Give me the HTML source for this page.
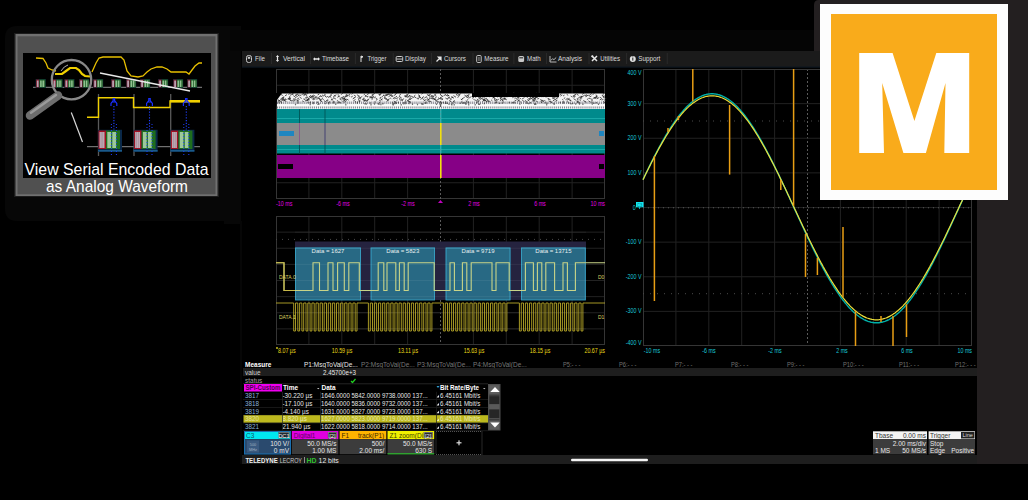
<!DOCTYPE html>
<html><head><meta charset="utf-8"><title>Scope</title>
<style>*{margin:0;padding:0}html,body{width:1028px;height:500px;overflow:hidden;background:#000}svg{display:block;font-family:"Liberation Sans",sans-serif}</style>
</head><body><svg width="1028" height="500" viewBox="0 0 1028 500" font-family="Liberation Sans, sans-serif"><path d="M17 26 H241 V224 H224 V221 H17 Q5 221 5 209 V38 Q5 26 17 26 Z" fill="#070707"/><rect x="240" y="221" width="2" height="243" fill="#060606" /><rect x="230" y="30" width="585" height="21" fill="#050505" /><rect x="14" y="33" width="205" height="164" fill="#1c1c1c" /><rect x="15.5" y="34" width="202" height="162" fill="#707070" /><rect x="17.5" y="36.3" width="198" height="158" fill="#505050" /><rect x="23" y="53" width="188" height="125" fill="#000" /><polyline points="36,58 43,58.5 46,63 48,68 52,70 56,71" stroke="#e8c000" stroke-width="1.3" fill="none" /><polyline points="55,74 62,74 66,71 70,68 76,68 79,70 82,74 85,76 90,76.5" stroke="#f0d000" stroke-width="2.2" fill="none" /><polyline points="92,72 96,63 99,58 103,57 108,57 114,57 121,57 124,60 127,71 131,76 138,77 143,76 147,72 151,69 157,67 162,67 167,69 171,72 178,72 186,72 189,74 192,70 195,66 199,63 202,63" stroke="#e8c000" stroke-width="1.3" fill="none" /><line x1="33" y1="87.3" x2="202" y2="87.3" stroke="#8a8a8a" stroke-width="1" /><rect x="35.6" y="79" width="10.2" height="9" fill="#0a2838" /><rect x="36.1" y="79.5" width="3.2" height="8" fill="#7a1020" /><rect x="36.800000000000004" y="80.5" width="1.8" height="6.5" fill="#b8a0b0" /><rect x="39.4" y="79.5" width="6" height="8" fill="#1a5a22" /><rect x="40.1" y="80.5" width="1.6" height="6.5" fill="#90c090" /><rect x="42.4" y="80.5" width="1.6" height="6.5" fill="#90c090" /><rect x="44.400000000000006" y="80.5" width="0.6" height="6.5" fill="#5a8a5a" /><rect x="52.4" y="79" width="10.2" height="9" fill="#0a2838" /><rect x="52.9" y="79.5" width="3.2" height="8" fill="#7a1020" /><rect x="53.6" y="80.5" width="1.8" height="6.5" fill="#b8a0b0" /><rect x="56.199999999999996" y="79.5" width="6" height="8" fill="#1a5a22" /><rect x="56.9" y="80.5" width="1.6" height="6.5" fill="#90c090" /><rect x="59.199999999999996" y="80.5" width="1.6" height="6.5" fill="#90c090" /><rect x="61.2" y="80.5" width="0.6" height="6.5" fill="#5a8a5a" /><rect x="64.3" y="79" width="10.2" height="9" fill="#0a2838" /><rect x="64.8" y="79.5" width="3.2" height="8" fill="#7a1020" /><rect x="65.5" y="80.5" width="1.8" height="6.5" fill="#b8a0b0" /><rect x="68.1" y="79.5" width="6" height="8" fill="#1a5a22" /><rect x="68.8" y="80.5" width="1.6" height="6.5" fill="#90c090" /><rect x="71.1" y="80.5" width="1.6" height="6.5" fill="#90c090" /><rect x="73.1" y="80.5" width="0.6" height="6.5" fill="#5a8a5a" /><rect x="79" y="79" width="10.2" height="9" fill="#0a2838" /><rect x="79.5" y="79.5" width="3.2" height="8" fill="#7a1020" /><rect x="80.2" y="80.5" width="1.8" height="6.5" fill="#b8a0b0" /><rect x="82.8" y="79.5" width="6" height="8" fill="#1a5a22" /><rect x="83.5" y="80.5" width="1.6" height="6.5" fill="#90c090" /><rect x="85.8" y="80.5" width="1.6" height="6.5" fill="#90c090" /><rect x="87.8" y="80.5" width="0.6" height="6.5" fill="#5a8a5a" /><rect x="93" y="79" width="10.2" height="9" fill="#0a2838" /><rect x="93.5" y="79.5" width="3.2" height="8" fill="#7a1020" /><rect x="94.2" y="80.5" width="1.8" height="6.5" fill="#b8a0b0" /><rect x="96.8" y="79.5" width="6" height="8" fill="#1a5a22" /><rect x="97.5" y="80.5" width="1.6" height="6.5" fill="#90c090" /><rect x="99.8" y="80.5" width="1.6" height="6.5" fill="#90c090" /><rect x="101.8" y="80.5" width="0.6" height="6.5" fill="#5a8a5a" /><rect x="111" y="79" width="10.2" height="9" fill="#0a2838" /><rect x="111.5" y="79.5" width="3.2" height="8" fill="#7a1020" /><rect x="112.2" y="80.5" width="1.8" height="6.5" fill="#b8a0b0" /><rect x="114.8" y="79.5" width="6" height="8" fill="#1a5a22" /><rect x="115.5" y="80.5" width="1.6" height="6.5" fill="#90c090" /><rect x="117.8" y="80.5" width="1.6" height="6.5" fill="#90c090" /><rect x="119.8" y="80.5" width="0.6" height="6.5" fill="#5a8a5a" /><rect x="126" y="79" width="10.2" height="9" fill="#0a2838" /><rect x="126.5" y="79.5" width="3.2" height="8" fill="#7a1020" /><rect x="127.2" y="80.5" width="1.8" height="6.5" fill="#b8a0b0" /><rect x="129.8" y="79.5" width="6" height="8" fill="#1a5a22" /><rect x="130.5" y="80.5" width="1.6" height="6.5" fill="#90c090" /><rect x="132.8" y="80.5" width="1.6" height="6.5" fill="#90c090" /><rect x="134.8" y="80.5" width="0.6" height="6.5" fill="#5a8a5a" /><rect x="140" y="79" width="10.2" height="9" fill="#0a2838" /><rect x="140.5" y="79.5" width="3.2" height="8" fill="#7a1020" /><rect x="141.2" y="80.5" width="1.8" height="6.5" fill="#b8a0b0" /><rect x="143.8" y="79.5" width="6" height="8" fill="#1a5a22" /><rect x="144.5" y="80.5" width="1.6" height="6.5" fill="#90c090" /><rect x="146.8" y="80.5" width="1.6" height="6.5" fill="#90c090" /><rect x="148.8" y="80.5" width="0.6" height="6.5" fill="#5a8a5a" /><rect x="158" y="79" width="10.2" height="9" fill="#0a2838" /><rect x="158.5" y="79.5" width="3.2" height="8" fill="#7a1020" /><rect x="159.2" y="80.5" width="1.8" height="6.5" fill="#b8a0b0" /><rect x="161.8" y="79.5" width="6" height="8" fill="#1a5a22" /><rect x="162.5" y="80.5" width="1.6" height="6.5" fill="#90c090" /><rect x="164.8" y="80.5" width="1.6" height="6.5" fill="#90c090" /><rect x="166.8" y="80.5" width="0.6" height="6.5" fill="#5a8a5a" /><rect x="173" y="79" width="10.2" height="9" fill="#0a2838" /><rect x="173.5" y="79.5" width="3.2" height="8" fill="#7a1020" /><rect x="174.2" y="80.5" width="1.8" height="6.5" fill="#b8a0b0" /><rect x="176.8" y="79.5" width="6" height="8" fill="#1a5a22" /><rect x="177.5" y="80.5" width="1.6" height="6.5" fill="#90c090" /><rect x="179.8" y="80.5" width="1.6" height="6.5" fill="#90c090" /><rect x="181.8" y="80.5" width="0.6" height="6.5" fill="#5a8a5a" /><rect x="187" y="79" width="10.2" height="9" fill="#0a2838" /><rect x="187.5" y="79.5" width="3.2" height="8" fill="#7a1020" /><rect x="188.2" y="80.5" width="1.8" height="6.5" fill="#b8a0b0" /><rect x="190.8" y="79.5" width="6" height="8" fill="#1a5a22" /><rect x="191.5" y="80.5" width="1.6" height="6.5" fill="#90c090" /><rect x="193.8" y="80.5" width="1.6" height="6.5" fill="#90c090" /><rect x="195.8" y="80.5" width="0.6" height="6.5" fill="#5a8a5a" /><line x1="100" y1="73" x2="190" y2="91" stroke="#e8e8e8" stroke-width="1.5" /><line x1="71.3" y1="112.5" x2="82.5" y2="142" stroke="#d8d8d8" stroke-width="1.2" /><circle cx="71.5" cy="79.7" r="19.7" fill="none" stroke="#888" stroke-width="2.3"/><line x1="58" y1="95.5" x2="30" y2="115.5" stroke="#6e6e6e" stroke-width="8.5" stroke-linecap="round"/><line x1="56" y1="95" x2="31" y2="112.8" stroke="#9a9a9a" stroke-width="2.5" stroke-linecap="round"/><path d="M61 71 Q64 66 68 65" stroke="#c0c0c0" stroke-width="0.9" fill="none"/><line x1="98.5" y1="94" x2="98.5" y2="156" stroke="#5a5a5a" stroke-width="1.3" /><line x1="134" y1="94" x2="134" y2="156" stroke="#5a5a5a" stroke-width="1.3" /><line x1="170.7" y1="94" x2="170.7" y2="156" stroke="#5a5a5a" stroke-width="1.3" /><polyline points="87,117.3 98.5,117.3 98.5,97.7 133.5,97.7 133.5,107.5 170,107.5 170,101 200,101" stroke="#f0d000" stroke-width="1.4" fill="none" /><rect x="170" y="100" width="30" height="2.6" fill="#f0d000" /><line x1="87" y1="146.7" x2="200" y2="146.7" stroke="#8a8a8a" stroke-width="1" /><rect x="98" y="129.8" width="24" height="22" fill="#0a2848" /><rect x="98.5" y="130.5" width="7.5" height="18.5" fill="#a01020" /><rect x="99.5" y="132" width="5" height="16" fill="#c0a8b4" /><rect x="100.8" y="132" width="0.6" height="16" fill="#9a8a94" /><rect x="102.5" y="132" width="0.6" height="16" fill="#9a8a94" /><rect x="106" y="130.5" width="14" height="18.5" fill="#1e6e1e" /><rect x="107.3" y="132" width="3.8" height="16" fill="#9cc89c" /><rect x="112.3" y="132" width="3.8" height="16" fill="#9cc89c" /><rect x="98" y="150" width="24" height="1.6" fill="#1a5a8a" /><path d="M111.0 106 v-2.5 l2.2 -3 v-2 h1.4 v2 l2.2 3 v2.5 M112.7 102 h2.4" stroke="#1a30ff" stroke-width="1.2" fill="none"/><line x1="113.9" y1="106" x2="113.9" y2="130" stroke="#2040ff" stroke-width="1.1" stroke-dasharray="1.2 1.6"/><line x1="111.4" y1="124" x2="111.4" y2="155" stroke="#2040ff" stroke-width="1" stroke-dasharray="1 2"/><line x1="116.4" y1="124" x2="116.4" y2="155" stroke="#2040ff" stroke-width="1" stroke-dasharray="1 2"/><rect x="133.6" y="129.8" width="24" height="22" fill="#0a2848" /><rect x="134.1" y="130.5" width="7.5" height="18.5" fill="#a01020" /><rect x="135.1" y="132" width="5" height="16" fill="#c0a8b4" /><rect x="136.4" y="132" width="0.6" height="16" fill="#9a8a94" /><rect x="138.1" y="132" width="0.6" height="16" fill="#9a8a94" /><rect x="141.6" y="130.5" width="14" height="18.5" fill="#1e6e1e" /><rect x="142.9" y="132" width="3.8" height="16" fill="#9cc89c" /><rect x="147.9" y="132" width="3.8" height="16" fill="#9cc89c" /><rect x="133.6" y="150" width="24" height="1.6" fill="#1a5a8a" /><path d="M146.6 106 v-2.5 l2.2 -3 v-2 h1.4 v2 l2.2 3 v2.5 M148.3 102 h2.4" stroke="#1a30ff" stroke-width="1.2" fill="none"/><line x1="149.5" y1="106" x2="149.5" y2="130" stroke="#2040ff" stroke-width="1.1" stroke-dasharray="1.2 1.6"/><line x1="147.0" y1="124" x2="147.0" y2="155" stroke="#2040ff" stroke-width="1" stroke-dasharray="1 2"/><line x1="152.0" y1="124" x2="152.0" y2="155" stroke="#2040ff" stroke-width="1" stroke-dasharray="1 2"/><rect x="170.4" y="129.8" width="24" height="22" fill="#0a2848" /><rect x="170.9" y="130.5" width="7.5" height="18.5" fill="#a01020" /><rect x="171.9" y="132" width="5" height="16" fill="#c0a8b4" /><rect x="173.20000000000002" y="132" width="0.6" height="16" fill="#9a8a94" /><rect x="174.9" y="132" width="0.6" height="16" fill="#9a8a94" /><rect x="178.4" y="130.5" width="14" height="18.5" fill="#1e6e1e" /><rect x="179.70000000000002" y="132" width="3.8" height="16" fill="#9cc89c" /><rect x="184.70000000000002" y="132" width="3.8" height="16" fill="#9cc89c" /><rect x="170.4" y="150" width="24" height="1.6" fill="#1a5a8a" /><path d="M183.4 106 v-2.5 l2.2 -3 v-2 h1.4 v2 l2.2 3 v2.5 M185.10000000000002 102 h2.4" stroke="#1a30ff" stroke-width="1.2" fill="none"/><line x1="186.3" y1="106" x2="186.3" y2="130" stroke="#2040ff" stroke-width="1.1" stroke-dasharray="1.2 1.6"/><line x1="183.8" y1="124" x2="183.8" y2="155" stroke="#2040ff" stroke-width="1" stroke-dasharray="1 2"/><line x1="188.8" y1="124" x2="188.8" y2="155" stroke="#2040ff" stroke-width="1" stroke-dasharray="1 2"/><text x="24.5" y="174.8" fill="#fff" font-size="16.2" textLength="184" lengthAdjust="spacingAndGlyphs">View Serial Encoded Data</text><text x="46" y="192.4" fill="#fff" font-size="16.2" textLength="142" lengthAdjust="spacingAndGlyphs">as Analog Waveform</text><path d="M814 51 V5 Q814 0 819 0 H1028 V464 H977 V51 Z" fill="#231f20"/><rect x="242" y="51" width="735" height="413" fill="#000" /><rect x="242" y="51" width="735" height="16" fill="#1b1b1b" /><rect x="242" y="66.5" width="735" height="1.2" fill="#0c1620" /><text x="255" y="61" fill="#dcdcdc" font-size="7.5" text-anchor="start" font-weight="400" textLength="10" lengthAdjust="spacingAndGlyphs" >File</text><rect x="246.5" y="55.5" width="5" height="7" rx="2" fill="none" stroke="#c8c8c8" stroke-width="1"/><rect x="247.8" y="56.8" width="2.4" height="2" fill="#c8c8c8"/><rect x="271" y="53" width="0.8" height="11" fill="#2e2e2e" /><text x="283" y="61" fill="#dcdcdc" font-size="7.5" text-anchor="start" font-weight="400" textLength="22" lengthAdjust="spacingAndGlyphs" >Vertical</text><path d="M277.5 55 l1.6 2 h-1 v3 h1 l-1.6 2 l-1.6 -2 h1 v-3 h-1z" fill="#e8e8e8"/><rect x="310" y="53" width="0.8" height="11" fill="#2e2e2e" /><text x="322" y="61" fill="#dcdcdc" font-size="7.5" text-anchor="start" font-weight="400" textLength="27" lengthAdjust="spacingAndGlyphs" >Timebase</text><path d="M313 59 l2 -1.8 v1.1 h3 v-1.1 l2 1.8 l-2 1.8 v-1.1 h-3 v1.1z" fill="#e8e8e8"/><rect x="354.9" y="53" width="0.8" height="11" fill="#2e2e2e" /><text x="367.5" y="61" fill="#dcdcdc" font-size="7.5" text-anchor="start" font-weight="400" textLength="19.0" lengthAdjust="spacingAndGlyphs" >Trigger</text><path d="M361 62 V56 M361 56 l2 0.8 l-2 0.9" stroke="#e0e0e0" stroke-width="1" fill="#e0e0e0"/><rect x="392.8" y="53" width="0.8" height="11" fill="#2e2e2e" /><text x="405" y="61" fill="#dcdcdc" font-size="7.5" text-anchor="start" font-weight="400" textLength="20.899999999999977" lengthAdjust="spacingAndGlyphs" >Display</text><rect x="396.2" y="56.5" width="6.5" height="5" rx="1" fill="none" stroke="#d0d0d0" stroke-width="1"/><rect x="397" y="58.6" width="5" height="0.9" fill="#d0d0d0"/><rect x="431.2" y="53" width="0.8" height="11" fill="#2e2e2e" /><text x="444" y="61" fill="#dcdcdc" font-size="7.5" text-anchor="start" font-weight="400" textLength="22" lengthAdjust="spacingAndGlyphs" >Cursors</text><path d="M436.5 61.5 l3.5 -3.5 M438.3 57 h2.7 v2.7z" stroke="#e8e8e8" stroke-width="1.2" fill="#e8e8e8"/><rect x="472.6" y="53" width="0.8" height="11" fill="#2e2e2e" /><text x="484.3" y="61" fill="#dcdcdc" font-size="7.5" text-anchor="start" font-weight="400" textLength="24.30000000000001" lengthAdjust="spacingAndGlyphs" >Measure</text><rect x="476.7" y="55.5" width="4.5" height="7" rx="1" fill="none" stroke="#c0c0c0" stroke-width="1"/><rect x="478.2" y="57.5" width="1.5" height="1" fill="#c0c0c0"/><rect x="478.2" y="59.5" width="1.5" height="1" fill="#c0c0c0"/><rect x="513.5" y="53" width="0.8" height="11" fill="#2e2e2e" /><text x="527" y="61" fill="#dcdcdc" font-size="7.5" text-anchor="start" font-weight="400" textLength="13.700000000000045" lengthAdjust="spacingAndGlyphs" >Math</text><rect x="518.3" y="56" width="5.8" height="6" rx="1.5" fill="#c8c8c8"/><rect x="519.3" y="57.2" width="3.8" height="1.2" fill="#333"/><rect x="546" y="53" width="0.8" height="11" fill="#2e2e2e" /><text x="558" y="61" fill="#dcdcdc" font-size="7.5" text-anchor="start" font-weight="400" textLength="24" lengthAdjust="spacingAndGlyphs" >Analysis</text><path d="M550 56 V62 H556.5 M550.8 60.5 l1.8 -1.8 l1.3 1 l2.3 -2.2" stroke="#c8c8c8" stroke-width="0.9" fill="none"/><rect x="588.6" y="53" width="0.8" height="11" fill="#2e2e2e" /><text x="600.3" y="61" fill="#dcdcdc" font-size="7.5" text-anchor="start" font-weight="400" textLength="19.700000000000045" lengthAdjust="spacingAndGlyphs" >Utilities</text><path d="M592 56 l5 5 M597 56 l-5 5" stroke="#e8e8e8" stroke-width="1.5"/><circle cx="592.3" cy="56.3" r="1.1" fill="#e8e8e8"/><rect x="626.3" y="53" width="0.8" height="11" fill="#2e2e2e" /><text x="638.2" y="61" fill="#dcdcdc" font-size="7.5" text-anchor="start" font-weight="400" textLength="22.09999999999991" lengthAdjust="spacingAndGlyphs" >Support</text><circle cx="632.8" cy="59" r="3" fill="#e0e0e0"/><rect x="632.3" y="57.8" width="1" height="2.8" fill="#222"/><rect x="632.3" y="56.5" width="1" height="0.8" fill="#222"/><rect x="666.8" y="53" width="0.8" height="11" fill="#2e2e2e" /><line x1="308.9" y1="69" x2="308.9" y2="199" stroke="#222222" stroke-width="1" /><line x1="341.8" y1="69" x2="341.8" y2="199" stroke="#222222" stroke-width="1" /><line x1="374.7" y1="69" x2="374.7" y2="199" stroke="#222222" stroke-width="1" /><line x1="407.6" y1="69" x2="407.6" y2="199" stroke="#222222" stroke-width="1" /><line x1="440.5" y1="69" x2="440.5" y2="199" stroke="#5a5a5a" stroke-width="1" stroke-dasharray="2 2"/><line x1="473.4" y1="69" x2="473.4" y2="199" stroke="#222222" stroke-width="1" /><line x1="506.3" y1="69" x2="506.3" y2="199" stroke="#222222" stroke-width="1" /><line x1="539.2" y1="69" x2="539.2" y2="199" stroke="#222222" stroke-width="1" /><line x1="572.1" y1="69" x2="572.1" y2="199" stroke="#222222" stroke-width="1" /><line x1="276" y1="85.25" x2="605" y2="85.25" stroke="#222222" stroke-width="1" /><line x1="276" y1="101.5" x2="605" y2="101.5" stroke="#222222" stroke-width="1" /><line x1="276" y1="117.75" x2="605" y2="117.75" stroke="#222222" stroke-width="1" /><line x1="276" y1="134.0" x2="605" y2="134.0" stroke="#222222" stroke-width="1" /><line x1="276" y1="150.25" x2="605" y2="150.25" stroke="#222222" stroke-width="1" /><line x1="276" y1="166.5" x2="605" y2="166.5" stroke="#222222" stroke-width="1" /><line x1="276" y1="182.75" x2="605" y2="182.75" stroke="#222222" stroke-width="1" /><rect x="276.5" y="69.5" width="328" height="129" fill="none" stroke="#353535"/><rect x="277" y="93.5" width="328" height="15.5" fill="#f4f4f4" /><path d="M383.2 95.1l2.2 1.4M546.4 94.7l2.1 1.3M289.3 97.3l1.3 0.8M457.7 94.4l2.1 1.3M483.8 98.4l1.3 -0.8M293.3 95.7l2.1 1.3M372.0 95.1l1.4 -0.9M460.8 99.1l1.4 0.9M399.1 98.1l1.3 0.8M480.0 97.7l2.1 -1.3M429.7 100.9l1.8 1.1M537.6 99.2l1.6 -1.0M449.3 100.6l2.4 -1.5M476.7 94.5l2.0 1.3M525.3 95.1l2.0 1.2M592.5 94.6l2.1 -1.3M388.6 96.6l2.0 -1.2M299.6 94.7l1.6 1.0M296.9 99.3l2.2 -1.4M370.3 96.9l2.3 1.4M585.5 96.7l2.2 -1.4M296.3 99.8l1.4 0.9M407.5 100.9l2.0 1.2M424.3 98.1l2.6 -1.6M560.4 96.1l1.9 -1.2M500.9 96.9l1.6 1.0M334.8 95.7l1.6 -1.0M549.6 95.4l1.7 1.0M414.4 96.8l2.1 1.3M503.5 97.9l2.2 1.4M426.8 100.5l2.7 -1.7M407.6 97.0l2.0 -1.2M297.4 94.5l1.5 1.0M313.1 98.5l1.4 0.9M453.0 101.1l2.2 1.4M563.8 98.6l1.4 -0.9M590.4 98.5l2.0 1.2M555.5 101.4l1.9 -1.2M379.3 95.1l2.4 -1.5M434.0 99.2l2.0 1.3M588.9 98.0l1.4 0.9M525.7 96.2l2.2 1.4M505.4 96.0l1.8 1.1M393.7 95.7l2.1 -1.3M485.8 98.6l2.5 1.5M541.4 100.1l2.4 1.5M342.6 97.7l2.4 1.5M536.2 97.5l1.5 -0.9M423.7 101.0l2.8 -1.7M303.4 94.8l2.0 -1.2M344.0 98.7l2.6 1.7M434.3 98.9l2.5 1.5M550.8 94.9l1.8 1.1M433.8 95.3l2.5 -1.5M305.5 101.1l2.4 -1.5M408.7 101.1l2.4 1.5M602.7 94.2l2.1 -1.3M541.5 95.1l2.5 -1.6M492.6 96.6l2.1 1.3M284.0 100.0l2.4 1.5M449.7 101.0l1.9 1.2M548.0 95.6l1.6 -1.0M441.4 99.7l1.7 -1.1M550.6 94.5l2.4 -1.5M494.3 100.1l2.0 1.3M451.4 97.9l1.2 -0.8M531.7 98.6l2.4 1.5M333.5 97.6l2.4 1.5M383.9 97.9l2.1 1.3M566.7 94.4l1.5 0.9M530.3 97.8l2.1 1.3M422.4 98.6l2.0 1.3M504.2 97.4l2.1 -1.3M443.5 95.9l2.0 -1.3M579.7 100.7l1.5 -1.0M322.0 94.9l1.9 1.2M497.1 97.2l1.5 -1.0M534.1 100.7l1.4 -0.9M323.9 100.6l2.7 1.7M521.9 94.7l2.6 1.6M601.7 100.2l1.5 -0.9M603.1 97.0l1.9 -1.2M381.5 99.4l1.2 -0.8M421.5 94.1l1.7 -1.1M445.0 94.5l2.8 1.7M595.7 94.8l1.6 1.0M574.1 95.4l2.4 -1.5M555.7 99.1l2.7 -1.7M326.0 100.9l2.1 -1.3M306.3 94.4l2.3 -1.4M570.7 96.0l1.2 0.8M539.9 94.6l2.6 1.6M363.7 94.9l1.2 -0.8M580.9 96.0l1.4 0.9M584.7 101.3l1.6 1.0M343.2 96.3l1.7 1.1M372.1 97.8l1.5 -0.9M540.6 101.5l1.3 0.8M517.5 98.1l1.5 -0.9M357.6 97.4l2.3 -1.4M492.3 98.1l2.6 -1.6M502.6 101.4l1.7 1.1M409.7 96.6l1.3 0.8M281.7 98.7l2.6 -1.6M330.5 94.6l2.5 -1.6M473.4 99.2l1.3 0.8M328.7 97.3l1.6 -1.0M596.0 98.1l1.6 -1.0M348.5 95.4l1.7 1.1M432.7 97.8l1.5 1.0M306.8 100.1l1.4 0.9M406.2 96.2l2.2 1.4M469.1 98.0l2.4 -1.5M527.7 99.4l2.0 -1.2M514.5 98.8l1.3 -0.8M517.7 100.1l1.4 0.9M548.1 98.4l2.6 1.6M304.9 94.3l2.2 1.4M400.5 97.4l1.3 0.8M482.4 99.1l2.0 1.2M426.9 94.5l2.7 1.7M493.3 94.5l2.4 -1.5M542.4 100.3l1.6 1.0M352.7 98.9l1.9 -1.2M302.2 100.8l1.7 1.0M479.4 98.8l1.3 0.8M385.8 98.9l2.3 1.4M281.1 94.5l1.6 1.0M504.0 99.1l1.7 -1.0M429.4 97.5l1.4 0.9M379.2 94.6l2.0 -1.2M427.5 100.1l2.7 -1.7M603.0 96.9l2.7 1.7M301.5 94.7l2.4 -1.5M589.5 95.0l2.5 -1.6M567.9 99.3l1.6 -1.0M406.3 95.2l2.7 -1.7M410.0 99.5l1.9 -1.2M380.7 100.3l1.2 -0.8M552.2 94.9l2.7 1.7M572.7 96.2l1.8 -1.1M405.0 100.5l1.3 -0.8M524.9 100.4l1.6 1.0M550.8 96.1l2.7 1.7M595.5 97.3l1.7 -1.1M534.5 97.2l1.2 -0.8M576.6 101.1l2.1 1.3M293.2 99.5l1.9 1.2M488.4 96.1l1.3 0.8M333.0 97.1l1.7 -1.0M519.4 101.3l1.6 1.0M375.7 98.2l1.8 1.1M488.0 94.6l2.0 -1.3M457.5 97.4l1.7 -1.1M417.2 98.1l1.6 1.0M389.2 94.7l1.6 -1.0M542.5 95.5l1.2 -0.8M402.6 99.6l1.5 -1.0M387.9 94.5l1.6 -1.0M318.3 97.8l2.2 1.4M307.4 100.7l1.8 -1.1M418.6 96.3l2.5 1.6M318.7 97.2l2.4 -1.5M594.6 97.7l1.3 -0.8M595.9 95.9l1.4 0.9M326.9 101.3l1.4 -0.9M304.9 99.8l1.2 0.8M353.3 100.9l2.2 -1.4M592.7 98.7l2.0 -1.3M506.1 94.8l1.3 0.8M404.3 95.7l2.2 1.4M453.3 101.5l1.6 -1.0M488.4 100.6l2.0 1.2M456.4 94.2l1.9 -1.2M295.1 95.5l2.6 -1.6M303.6 95.7l1.9 -1.2M351.4 94.3l1.7 -1.1M395.8 97.0l1.2 -0.8M519.4 97.8l1.5 1.0M379.2 100.2l1.6 1.0M363.9 100.7l1.4 -0.9M477.1 100.7l2.0 1.2M588.2 95.1l1.8 1.1M284.8 98.5l1.9 1.2M337.4 97.4l2.3 -1.5M517.3 101.5l2.7 -1.7M339.5 98.9l2.0 -1.3M287.5 99.0l1.8 -1.1M600.1 97.3l1.4 0.9M368.8 96.6l2.7 1.7M461.1 99.7l1.8 -1.1M546.6 97.2l1.3 -0.8M341.2 98.1l1.9 -1.2M396.5 100.7l1.2 -0.8M358.3 98.7l1.8 -1.2M288.4 94.5l2.7 -1.7M340.9 94.5l2.2 -1.4M366.3 101.2l2.2 -1.4M521.8 99.2l2.7 -1.7M278.2 99.7l2.7 1.7M285.0 95.8l2.0 -1.2M589.9 96.9l1.6 -1.0M544.3 95.0l2.0 1.2M540.2 99.5l2.5 1.6M476.2 96.5l1.7 -1.1M534.1 98.5l2.0 -1.3M523.9 95.9l1.3 0.8M435.0 98.1l1.5 -0.9M566.8 101.4l1.6 1.0M345.3 97.2l2.8 -1.7M333.8 95.0l1.9 1.2M522.3 100.4l2.3 1.4M532.8 96.2l1.6 -1.0M399.3 99.5l1.5 0.9M337.9 95.8l1.7 1.0M384.0 97.0l2.8 1.7M490.1 94.8l1.9 1.2M310.6 97.6l2.5 -1.6M576.9 94.3l1.7 1.0M293.5 98.5l2.5 1.6M582.1 96.8l2.6 -1.6M474.8 99.8l2.3 1.4M311.7 98.5l2.2 1.4M289.3 96.6l1.3 -0.8M289.5 99.5l2.7 1.7M545.6 97.1l1.8 -1.1M302.6 94.2l2.0 -1.2M297.8 94.8l1.8 1.1M486.7 94.7l1.5 -0.9M411.4 96.1l1.7 1.1M379.5 98.2l1.8 -1.1M283.0 99.7l2.5 1.6M405.2 97.0l2.7 -1.7M572.7 97.2l2.5 -1.6M466.5 96.7l2.4 1.5M281.9 98.1l2.2 -1.4M306.2 98.7l1.8 1.1M324.9 96.1l2.0 1.3M312.7 97.7l2.5 1.6M375.9 100.3l1.3 -0.8M380.2 98.6l2.2 1.4M573.6 98.7l2.5 1.6M487.0 100.4l2.2 1.4M549.0 95.4l1.5 -1.0M584.8 95.2l1.8 1.1M358.0 99.4l2.6 1.6M566.9 100.3l2.3 -1.4M315.6 98.5l2.1 -1.3M489.9 96.3l1.6 -1.0M493.1 97.4l1.9 1.2M278.2 101.4l1.9 -1.2M527.4 99.8l1.9 1.2M542.9 97.0l1.3 -0.8M418.2 94.7l1.9 1.2M290.3 95.0l2.7 -1.7M532.1 97.8l1.3 -0.8M491.1 99.9l1.2 0.8M603.7 99.5l2.5 1.6M320.2 100.6l1.7 1.0M502.1 99.4l1.6 -1.0M477.2 95.9l1.7 -1.1M573.9 97.4l1.6 -1.0M345.3 96.0l2.0 -1.3M399.1 95.5l1.8 -1.2M499.9 100.7l1.5 -0.9M314.7 98.0l2.2 -1.4M593.9 97.4l2.0 1.3M359.7 98.0l2.6 -1.6M363.8 101.4l2.1 -1.3M385.5 94.6l1.6 1.0M374.2 97.9l1.7 -1.1M517.4 99.6l1.6 -1.0M479.1 97.2l2.0 1.3M320.3 95.7l2.2 1.4M294.8 98.3l1.7 -1.1M452.2 97.1l1.7 1.1M344.0 98.7l2.0 1.2M281.6 100.0l2.3 -1.5M308.4 98.8l2.6 -1.6M408.8 96.0l1.2 -0.8M472.1 98.3l2.2 -1.4M358.5 100.8l1.3 0.8M410.2 95.8l1.3 0.8M281.1 98.1l2.7 1.7M412.5 97.9l2.2 -1.4M543.8 95.3l1.7 -1.1M482.3 101.5l2.4 -1.5M511.7 94.0l2.6 -1.6M303.4 98.9l1.5 0.9M362.7 98.8l1.4 -0.9M510.4 96.0l2.1 -1.3M501.9 100.9l2.8 -1.7M487.6 101.2l1.5 1.0M332.7 100.8l2.5 1.6M586.9 99.6l1.7 -1.1M384.8 95.8l2.7 -1.7M431.9 98.0l1.2 0.8M420.4 99.4l2.1 -1.3M535.9 96.9l2.1 1.3M324.4 94.2l1.4 0.9M390.1 95.1l1.2 0.8M322.4 98.8l1.3 0.8M518.7 94.5l2.1 -1.3M342.4 101.2l2.1 1.3M565.5 99.7l2.3 -1.5M312.1 95.5l1.4 0.9M588.4 100.8l2.4 1.5M547.6 98.7l1.7 1.0M320.5 99.9l2.2 -1.4M381.7 97.2l1.2 -0.8M582.1 94.4l2.4 -1.5M529.3 98.5l2.0 -1.2M479.8 94.2l1.9 -1.2M447.1 94.7l2.0 1.2M453.4 95.6l2.6 1.6M465.4 96.2l1.9 1.2M371.6 99.6l1.3 -0.8M438.0 97.7l2.5 1.5M594.2 98.4l2.7 -1.7M466.6 95.2l2.5 1.6M440.4 94.8l2.2 1.4M437.8 101.4l2.1 1.3M483.0 96.7l1.8 -1.2M569.5 99.6l1.9 1.2M399.0 96.3l1.9 1.2M401.4 100.6l1.6 -1.0M318.6 98.5l2.3 1.4M391.3 96.4l1.4 -0.9M494.2 99.6l1.5 -0.9M503.0 95.9l1.6 -1.0M428.5 100.6l1.6 1.0M364.7 99.7l2.5 1.6M514.3 101.3l2.4 -1.5M329.8 96.5l1.5 0.9M331.0 98.9l1.5 0.9M599.7 100.0l2.4 -1.5M366.8 94.8l2.7 -1.7M344.7 96.9l1.3 -0.8M557.2 97.3l1.6 -1.0M429.0 95.1l2.2 -1.4M278.8 95.8l2.6 -1.6M554.5 99.0l2.2 1.4M499.9 98.8l1.9 -1.2M362.2 99.3l2.6 1.6M533.6 99.3l2.2 -1.4M555.6 97.6l1.2 -0.8M447.0 99.0l2.6 -1.6M532.2 96.9l2.0 1.2M289.5 98.1l1.5 0.9M447.3 94.8l2.1 1.3M512.3 97.8l2.2 -1.4M448.1 97.1l2.7 1.7M601.8 95.4l2.0 1.3M516.1 98.6l2.2 -1.4M367.0 97.0l1.2 -0.8M577.3 98.7l2.3 -1.4M312.8 96.3l1.8 1.2M603.1 101.2l1.9 1.2M319.4 99.8l2.5 1.6M430.9 98.2l1.6 1.0M392.8 98.8l2.5 -1.6M430.5 96.2l2.1 1.3M532.8 97.5l2.5 1.5M364.7 96.8l1.6 -1.0M499.7 97.6l2.5 -1.6M394.4 98.9l1.7 -1.1M417.5 98.8l2.3 -1.4M327.1 96.3l1.8 1.1M548.6 100.8l2.5 1.5M451.1 96.6l2.1 1.3M345.8 94.5l1.7 1.0M466.7 100.4l1.5 -0.9M390.6 95.1l2.6 1.7M476.9 99.2l2.8 1.7M496.3 100.7l2.5 -1.5M341.7 99.2l2.0 -1.3M497.2 94.9l1.4 -0.9M353.8 95.0l2.0 1.2M435.9 100.8l2.3 1.5M440.4 98.0l2.6 1.6M329.6 96.4l2.3 -1.4M495.2 100.3l1.8 -1.1M605.0 99.1l1.5 -0.9M485.6 94.2l2.2 -1.4M542.2 94.7l2.0 1.2M288.1 99.4l2.2 -1.4M308.0 98.9l1.7 1.1M370.2 96.6l1.6 1.0M548.2 96.2l2.5 -1.6M386.5 101.4l2.6 -1.6M596.8 98.9l2.5 -1.5M340.1 99.3l1.4 0.9M534.2 94.3l2.4 -1.5M455.9 94.4l1.7 1.1M292.2 100.2l2.0 1.2M535.8 100.8l2.2 1.4M482.6 99.2l2.2 1.3M346.7 99.0l1.9 1.2M310.2 95.4l1.3 0.8M576.8 98.9l1.8 1.1M535.0 98.2l1.6 -1.0M337.6 94.3l1.2 0.8M440.3 97.9l2.5 -1.6M465.7 100.9l1.9 1.2M500.0 98.5l2.8 1.7M432.9 97.1l1.4 -0.9M346.6 95.1l1.2 0.8M280.1 99.0l2.8 1.7M348.6 94.9l2.0 -1.2M512.9 95.8l2.4 1.5M579.7 96.7l2.4 1.5M516.3 94.6l2.2 -1.4M428.1 101.0l1.6 1.0M512.2 94.1l1.2 0.8M404.6 96.3l2.2 -1.4M476.7 96.4l2.7 -1.7M431.1 95.2l2.7 1.7M396.2 98.8l2.2 -1.4M433.4 99.8l1.9 -1.2M534.4 98.3l1.7 1.0M481.0 98.9l2.5 -1.6M562.2 99.4l1.2 0.8M474.2 96.3l1.9 1.2M400.6 99.1l2.2 1.4M541.9 96.1l1.2 -0.8M364.9 95.2l2.7 1.7M371.6 95.1l2.6 1.6M366.8 100.4l2.5 -1.6M390.8 94.6l2.1 -1.3M342.7 99.6l2.7 1.7M378.5 94.4l1.8 1.1M580.7 98.4l1.2 -0.8M427.8 94.7l2.5 1.6M353.4 98.3l2.6 -1.6M433.3 98.4l1.5 0.9M307.2 100.0l1.7 -1.0M409.0 97.9l1.4 0.9M579.6 97.7l2.6 -1.6M484.5 99.9l1.4 0.9M390.1 97.9l1.2 0.8M344.1 100.5l2.1 1.3M362.8 99.8l1.9 -1.2M528.7 100.1l2.7 -1.7M553.7 96.5l2.8 -1.7M304.4 94.4l2.1 -1.3M436.7 100.3l2.6 -1.6M579.5 99.3l1.3 -0.8M462.1 98.8l2.7 -1.7M336.9 100.4l1.8 1.1M602.3 95.7l1.3 -0.8M585.7 94.4l2.1 1.3M551.6 94.4l2.5 -1.5M295.3 95.1l2.4 1.5M499.0 96.2l2.1 1.3M431.4 96.8l1.8 -1.1M434.9 95.3l1.6 1.0M576.9 100.7l1.9 1.2M539.0 95.2l2.5 1.6M583.3 100.5l2.6 1.6M532.3 101.2l2.7 -1.7M553.3 98.7l1.9 -1.2M382.8 95.8l1.4 -0.9M323.8 95.7l1.3 -0.8M458.5 95.1l2.6 -1.6M414.2 95.9l1.2 -0.8M386.7 95.3l2.0 -1.2M426.6 97.6l1.4 0.9M484.0 99.9l2.7 -1.7M551.0 94.9l2.4 -1.5M418.7 96.0l1.6 1.0M309.0 96.2l2.6 1.6M550.0 101.3l1.4 0.9M422.0 97.8l2.0 -1.3M277.6 100.2l2.0 1.3M395.1 94.3l1.9 -1.2M464.4 95.0l1.5 0.9M510.4 95.5l1.3 0.8M568.7 99.5l2.4 1.5M344.6 98.6l2.3 1.5M468.2 95.5l1.3 -0.8M552.9 100.9l2.0 -1.3M387.0 100.3l2.6 -1.6M306.6 97.1l2.4 1.5M563.0 96.0l1.5 -0.9M289.0 99.3l2.1 1.3M393.8 101.0l2.7 1.7M316.6 99.4l2.5 -1.6M532.6 100.5l2.1 1.3M372.6 94.8l2.4 -1.5M445.4 98.0l2.1 1.3M356.9 94.7l2.2 1.4M310.7 95.9l2.5 1.6M283.4 100.9l2.4 -1.5M282.8 98.5l2.1 1.3M507.5 94.8l2.6 1.6M291.8 94.9l2.0 -1.2M313.1 94.9l2.6 1.6M559.4 95.1l2.1 -1.3M330.9 100.2l2.7 -1.7M504.6 98.5l2.2 1.4M406.8 101.1l2.4 -1.5M408.4 100.3l2.3 -1.5M544.3 100.4l1.3 0.8M591.2 101.0l1.6 -1.0M494.5 94.1l1.4 0.9M299.7 97.2l2.0 1.3M351.0 97.2l1.8 -1.1M484.7 100.1l2.6 1.6M288.3 98.8l1.6 -1.0M483.1 100.0l1.3 0.8M359.2 97.9l1.9 1.2M371.3 96.3l2.2 1.4M296.8 101.2l2.7 -1.7M304.7 98.4l2.7 -1.7M317.6 95.0l1.7 -1.0M466.4 96.1l2.4 -1.5M552.4 98.6l2.1 -1.3M343.0 99.3l1.9 -1.2M478.0 97.5l1.7 1.1M386.4 95.4l2.1 -1.3" stroke="#282828" stroke-width="0.9" fill="none" opacity="0.85"/><path d="M277.5 101.5v2.5M277.5 106.5v2M279.6 101.5v2.5M279.6 106.5v2M281.6 101.5v2.5M281.6 106.5v2M283.7 101.5v2.5M283.7 106.5v2M285.7 101.5v2.5M285.7 106.5v2M287.8 101.5v2.5M287.8 106.5v2M289.8 101.5v2.5M289.8 106.5v2M291.9 101.5v2.5M291.9 106.5v2M293.9 101.5v2.5M293.9 106.5v2M296.0 101.5v2.5M296.0 106.5v2M298.0 101.5v2.5M298.0 106.5v2M300.1 101.5v2.5M300.1 106.5v2M302.1 101.5v2.5M302.1 106.5v2M304.2 101.5v2.5M304.2 106.5v2M306.2 101.5v2.5M306.2 106.5v2M308.3 101.5v2.5M308.3 106.5v2M310.3 101.5v2.5M310.3 106.5v2M312.4 101.5v2.5M312.4 106.5v2M314.4 101.5v2.5M314.4 106.5v2M316.5 101.5v2.5M316.5 106.5v2M318.5 101.5v2.5M318.5 106.5v2M320.6 101.5v2.5M320.6 106.5v2M322.6 101.5v2.5M322.6 106.5v2M324.7 101.5v2.5M324.7 106.5v2M326.7 101.5v2.5M326.7 106.5v2M328.8 101.5v2.5M328.8 106.5v2M330.8 101.5v2.5M330.8 106.5v2M332.9 101.5v2.5M332.9 106.5v2M334.9 101.5v2.5M334.9 106.5v2M337.0 101.5v2.5M337.0 106.5v2M339.0 101.5v2.5M339.0 106.5v2M341.1 101.5v2.5M341.1 106.5v2M343.1 101.5v2.5M343.1 106.5v2M345.2 101.5v2.5M345.2 106.5v2M347.2 101.5v2.5M347.2 106.5v2M349.3 101.5v2.5M349.3 106.5v2M351.3 101.5v2.5M351.3 106.5v2M353.4 101.5v2.5M353.4 106.5v2M355.4 101.5v2.5M355.4 106.5v2M357.5 101.5v2.5M357.5 106.5v2M359.5 101.5v2.5M359.5 106.5v2M361.6 101.5v2.5M361.6 106.5v2M363.6 101.5v2.5M363.6 106.5v2M365.7 101.5v2.5M365.7 106.5v2M367.7 101.5v2.5M367.7 106.5v2M369.8 101.5v2.5M369.8 106.5v2M371.8 101.5v2.5M371.8 106.5v2M373.9 101.5v2.5M373.9 106.5v2M375.9 101.5v2.5M375.9 106.5v2M378.0 101.5v2.5M378.0 106.5v2M380.0 101.5v2.5M380.0 106.5v2M382.1 101.5v2.5M382.1 106.5v2M384.1 101.5v2.5M384.1 106.5v2M386.2 101.5v2.5M386.2 106.5v2M388.2 101.5v2.5M388.2 106.5v2M390.3 101.5v2.5M390.3 106.5v2M392.3 101.5v2.5M392.3 106.5v2M394.4 101.5v2.5M394.4 106.5v2M396.4 101.5v2.5M396.4 106.5v2M398.5 101.5v2.5M398.5 106.5v2M400.5 101.5v2.5M400.5 106.5v2M402.6 101.5v2.5M402.6 106.5v2M404.6 101.5v2.5M404.6 106.5v2M406.7 101.5v2.5M406.7 106.5v2M408.7 101.5v2.5M408.7 106.5v2M410.8 101.5v2.5M410.8 106.5v2M412.8 101.5v2.5M412.8 106.5v2M414.9 101.5v2.5M414.9 106.5v2M416.9 101.5v2.5M416.9 106.5v2M419.0 101.5v2.5M419.0 106.5v2M421.0 101.5v2.5M421.0 106.5v2M423.1 101.5v2.5M423.1 106.5v2M425.1 101.5v2.5M425.1 106.5v2M427.2 101.5v2.5M427.2 106.5v2M429.2 101.5v2.5M429.2 106.5v2M431.3 101.5v2.5M431.3 106.5v2M433.3 101.5v2.5M433.3 106.5v2M435.4 101.5v2.5M435.4 106.5v2M437.4 101.5v2.5M437.4 106.5v2M439.5 101.5v2.5M439.5 106.5v2M441.5 101.5v2.5M441.5 106.5v2M443.6 101.5v2.5M443.6 106.5v2M445.6 101.5v2.5M445.6 106.5v2M447.7 101.5v2.5M447.7 106.5v2M449.7 101.5v2.5M449.7 106.5v2M451.8 101.5v2.5M451.8 106.5v2M453.8 101.5v2.5M453.8 106.5v2M455.9 101.5v2.5M455.9 106.5v2M457.9 101.5v2.5M457.9 106.5v2M460.0 101.5v2.5M460.0 106.5v2M462.0 101.5v2.5M462.0 106.5v2M464.1 101.5v2.5M464.1 106.5v2M466.1 101.5v2.5M466.1 106.5v2M468.2 101.5v2.5M468.2 106.5v2M470.2 101.5v2.5M470.2 106.5v2M472.3 101.5v2.5M472.3 106.5v2M474.3 101.5v2.5M474.3 106.5v2M476.4 101.5v2.5M476.4 106.5v2M478.4 101.5v2.5M478.4 106.5v2M480.5 101.5v2.5M480.5 106.5v2M482.5 101.5v2.5M482.5 106.5v2M484.6 101.5v2.5M484.6 106.5v2M486.6 101.5v2.5M486.6 106.5v2M488.7 101.5v2.5M488.7 106.5v2M490.7 101.5v2.5M490.7 106.5v2M492.8 101.5v2.5M492.8 106.5v2M494.8 101.5v2.5M494.8 106.5v2M496.9 101.5v2.5M496.9 106.5v2M498.9 101.5v2.5M498.9 106.5v2M501.0 101.5v2.5M501.0 106.5v2M503.0 101.5v2.5M503.0 106.5v2M505.1 101.5v2.5M505.1 106.5v2M507.1 101.5v2.5M507.1 106.5v2M509.2 101.5v2.5M509.2 106.5v2M511.2 101.5v2.5M511.2 106.5v2M513.3 101.5v2.5M513.3 106.5v2M515.3 101.5v2.5M515.3 106.5v2M517.4 101.5v2.5M517.4 106.5v2M519.4 101.5v2.5M519.4 106.5v2M521.5 101.5v2.5M521.5 106.5v2M523.5 101.5v2.5M523.5 106.5v2M525.6 101.5v2.5M525.6 106.5v2M527.6 101.5v2.5M527.6 106.5v2M529.7 101.5v2.5M529.7 106.5v2M531.7 101.5v2.5M531.7 106.5v2M533.8 101.5v2.5M533.8 106.5v2M535.8 101.5v2.5M535.8 106.5v2M537.9 101.5v2.5M537.9 106.5v2M539.9 101.5v2.5M539.9 106.5v2M542.0 101.5v2.5M542.0 106.5v2M544.0 101.5v2.5M544.0 106.5v2M546.1 101.5v2.5M546.1 106.5v2M548.1 101.5v2.5M548.1 106.5v2M550.2 101.5v2.5M550.2 106.5v2M552.2 101.5v2.5M552.2 106.5v2M554.3 101.5v2.5M554.3 106.5v2M556.3 101.5v2.5M556.3 106.5v2M558.4 101.5v2.5M558.4 106.5v2M560.4 101.5v2.5M560.4 106.5v2M562.5 101.5v2.5M562.5 106.5v2M564.5 101.5v2.5M564.5 106.5v2M566.6 101.5v2.5M566.6 106.5v2M568.6 101.5v2.5M568.6 106.5v2M570.6 101.5v2.5M570.6 106.5v2M572.7 101.5v2.5M572.7 106.5v2M574.7 101.5v2.5M574.7 106.5v2M576.8 101.5v2.5M576.8 106.5v2M578.8 101.5v2.5M578.8 106.5v2M580.9 101.5v2.5M580.9 106.5v2M582.9 101.5v2.5M582.9 106.5v2M585.0 101.5v2.5M585.0 106.5v2M587.0 101.5v2.5M587.0 106.5v2M589.1 101.5v2.5M589.1 106.5v2M591.1 101.5v2.5M591.1 106.5v2M593.2 101.5v2.5M593.2 106.5v2M595.2 101.5v2.5M595.2 106.5v2M597.3 101.5v2.5M597.3 106.5v2M599.3 101.5v2.5M599.3 106.5v2M601.4 101.5v2.5M601.4 106.5v2M603.4 101.5v2.5M603.4 106.5v2" stroke="#6a6a78" stroke-width="0.8" fill="none"/><rect x="277" y="104.6" width="328" height="1.2" fill="#ffffff" /><path d="M280.9 102.1h1.2v1.5h-1.2zM559.7 101.7h1.2v1.5h-1.2zM459.6 102.5h1.2v1.5h-1.2zM370.4 104.0h1.2v1.5h-1.2zM373.9 103.3h1.2v1.5h-1.2zM329.0 101.2h1.2v1.5h-1.2zM562.8 102.3h1.2v1.5h-1.2zM297.3 102.2h1.2v1.5h-1.2zM421.3 103.2h1.2v1.5h-1.2zM312.8 101.7h1.2v1.5h-1.2zM591.7 103.2h1.2v1.5h-1.2zM327.7 102.0h1.2v1.5h-1.2zM392.6 103.0h1.2v1.5h-1.2zM479.1 103.5h1.2v1.5h-1.2zM546.4 102.6h1.2v1.5h-1.2zM519.3 103.2h1.2v1.5h-1.2zM526.2 102.4h1.2v1.5h-1.2zM534.5 103.1h1.2v1.5h-1.2zM577.0 101.4h1.2v1.5h-1.2zM562.6 101.0h1.2v1.5h-1.2zM528.1 102.8h1.2v1.5h-1.2zM440.3 103.9h1.2v1.5h-1.2zM464.6 102.3h1.2v1.5h-1.2zM534.0 103.6h1.2v1.5h-1.2zM476.2 102.1h1.2v1.5h-1.2zM425.3 102.4h1.2v1.5h-1.2zM514.2 101.9h1.2v1.5h-1.2zM405.1 102.7h1.2v1.5h-1.2zM403.1 102.0h1.2v1.5h-1.2zM535.2 103.5h1.2v1.5h-1.2zM440.9 102.3h1.2v1.5h-1.2zM337.4 101.9h1.2v1.5h-1.2zM324.6 102.7h1.2v1.5h-1.2zM467.8 101.3h1.2v1.5h-1.2zM578.8 102.0h1.2v1.5h-1.2zM553.6 103.5h1.2v1.5h-1.2zM591.5 101.6h1.2v1.5h-1.2zM416.9 103.7h1.2v1.5h-1.2zM280.5 101.1h1.2v1.5h-1.2zM462.3 102.5h1.2v1.5h-1.2zM578.9 103.3h1.2v1.5h-1.2zM453.6 104.0h1.2v1.5h-1.2zM446.7 102.6h1.2v1.5h-1.2zM501.8 102.2h1.2v1.5h-1.2zM394.3 102.8h1.2v1.5h-1.2zM392.2 103.8h1.2v1.5h-1.2zM498.9 102.6h1.2v1.5h-1.2zM309.5 102.1h1.2v1.5h-1.2zM408.5 102.7h1.2v1.5h-1.2zM465.3 103.6h1.2v1.5h-1.2zM593.3 102.5h1.2v1.5h-1.2zM421.4 102.9h1.2v1.5h-1.2zM603.7 102.0h1.2v1.5h-1.2zM450.9 103.4h1.2v1.5h-1.2zM333.0 102.0h1.2v1.5h-1.2zM597.9 103.5h1.2v1.5h-1.2zM445.1 101.3h1.2v1.5h-1.2zM570.4 103.1h1.2v1.5h-1.2zM546.1 104.0h1.2v1.5h-1.2zM568.3 102.3h1.2v1.5h-1.2zM328.3 101.9h1.2v1.5h-1.2zM444.8 102.5h1.2v1.5h-1.2zM338.7 101.5h1.2v1.5h-1.2zM483.7 102.8h1.2v1.5h-1.2zM392.8 104.0h1.2v1.5h-1.2zM485.8 101.1h1.2v1.5h-1.2zM411.9 103.4h1.2v1.5h-1.2zM377.6 103.1h1.2v1.5h-1.2zM278.3 101.9h1.2v1.5h-1.2zM553.2 102.8h1.2v1.5h-1.2zM496.1 101.6h1.2v1.5h-1.2zM440.3 102.7h1.2v1.5h-1.2zM364.3 102.9h1.2v1.5h-1.2zM451.3 104.0h1.2v1.5h-1.2zM465.4 102.2h1.2v1.5h-1.2zM316.9 101.5h1.2v1.5h-1.2zM526.1 101.3h1.2v1.5h-1.2zM309.8 101.5h1.2v1.5h-1.2zM448.4 103.5h1.2v1.5h-1.2zM478.1 103.4h1.2v1.5h-1.2zM297.4 101.0h1.2v1.5h-1.2zM529.8 102.0h1.2v1.5h-1.2zM511.7 102.1h1.2v1.5h-1.2zM332.6 101.8h1.2v1.5h-1.2zM309.6 103.7h1.2v1.5h-1.2zM468.0 102.0h1.2v1.5h-1.2zM424.5 102.2h1.2v1.5h-1.2zM294.9 103.7h1.2v1.5h-1.2zM468.1 103.9h1.2v1.5h-1.2zM421.2 102.9h1.2v1.5h-1.2zM358.8 101.1h1.2v1.5h-1.2zM582.3 103.6h1.2v1.5h-1.2zM380.3 103.7h1.2v1.5h-1.2zM544.6 101.9h1.2v1.5h-1.2zM474.6 103.9h1.2v1.5h-1.2zM439.5 103.8h1.2v1.5h-1.2zM356.7 102.2h1.2v1.5h-1.2zM512.7 101.7h1.2v1.5h-1.2zM378.4 103.6h1.2v1.5h-1.2zM435.9 103.4h1.2v1.5h-1.2zM356.8 101.5h1.2v1.5h-1.2zM394.6 101.6h1.2v1.5h-1.2zM595.7 101.9h1.2v1.5h-1.2zM461.2 101.3h1.2v1.5h-1.2zM452.1 102.2h1.2v1.5h-1.2zM409.2 101.2h1.2v1.5h-1.2zM317.4 103.5h1.2v1.5h-1.2zM392.2 101.7h1.2v1.5h-1.2zM339.7 101.9h1.2v1.5h-1.2zM354.8 101.1h1.2v1.5h-1.2zM494.9 102.0h1.2v1.5h-1.2zM328.1 103.1h1.2v1.5h-1.2zM307.4 101.8h1.2v1.5h-1.2zM550.9 101.4h1.2v1.5h-1.2zM422.4 103.5h1.2v1.5h-1.2zM541.0 101.5h1.2v1.5h-1.2zM392.8 103.2h1.2v1.5h-1.2zM400.6 103.9h1.2v1.5h-1.2zM345.2 103.9h1.2v1.5h-1.2zM442.6 101.7h1.2v1.5h-1.2zM425.5 101.4h1.2v1.5h-1.2zM508.7 101.8h1.2v1.5h-1.2zM572.1 102.8h1.2v1.5h-1.2zM397.7 101.7h1.2v1.5h-1.2zM476.5 101.6h1.2v1.5h-1.2zM563.1 101.4h1.2v1.5h-1.2zM445.3 102.6h1.2v1.5h-1.2zM365.7 103.3h1.2v1.5h-1.2zM403.2 103.0h1.2v1.5h-1.2zM463.2 101.9h1.2v1.5h-1.2zM404.9 101.3h1.2v1.5h-1.2zM335.1 103.6h1.2v1.5h-1.2zM382.3 103.0h1.2v1.5h-1.2zM312.7 102.7h1.2v1.5h-1.2zM395.6 102.5h1.2v1.5h-1.2zM374.4 101.2h1.2v1.5h-1.2zM379.1 101.7h1.2v1.5h-1.2zM318.4 103.2h1.2v1.5h-1.2zM369.6 102.2h1.2v1.5h-1.2zM575.1 103.3h1.2v1.5h-1.2z" fill="#303030" opacity="0.7"/><rect x="472" y="93" width="87" height="4" fill="#000" /><path d="M276 109 L277 100 L282 93 L276 93 Z" fill="#000"/><rect x="277" y="109" width="328" height="14" fill="#008a8c" /><rect x="277" y="118" width="328" height="1" fill="#1aa8a8" /><rect x="277" y="123" width="328" height="22" fill="#8b8b8b" /><rect x="277" y="145" width="328" height="8.5" fill="#008a8c" /><rect x="277" y="149" width="328" height="1" fill="#1aa8a8" /><rect x="299.0" y="109" width="1" height="44.5" fill="#005a5c" /><rect x="299.0" y="123" width="1" height="22" fill="#8a5a8a" /><rect x="324.5" y="109" width="1" height="44.5" fill="#005a5c" /><rect x="324.5" y="123" width="1" height="22" fill="#8a5a8a" /><rect x="277" y="155" width="328" height="23" fill="#860086" /><rect x="279" y="131" width="15" height="5" fill="#1f86c0" /><rect x="278" y="164" width="15" height="5" fill="#000" /><rect x="599" y="131" width="5" height="5" fill="#1f86c0" /><rect x="599" y="164" width="5" height="5" fill="#000" /><line x1="440.5" y1="69" x2="440.5" y2="199" stroke="#5a5a5a" stroke-width="1" stroke-dasharray="2 2"/><rect x="440" y="123" width="1.6" height="22" fill="#f0e010" /><rect x="440" y="155" width="1.6" height="23" fill="#f0e010" /><rect x="440.3" y="109" width="1" height="14" fill="#40c0c0" /><rect x="440.3" y="145" width="1" height="8.5" fill="#40c0c0" /><text transform="translate(276,206.2) scale(0.85,1)" fill="#e000e0" font-size="6.3" text-anchor="start" font-weight="400">-10 ms</text><text transform="translate(343,206.2) scale(0.85,1)" fill="#e000e0" font-size="6.3" text-anchor="middle" font-weight="400">-6 ms</text><text transform="translate(408,206.2) scale(0.85,1)" fill="#e000e0" font-size="6.3" text-anchor="middle" font-weight="400">-2 ms</text><text transform="translate(474,206.2) scale(0.85,1)" fill="#e000e0" font-size="6.3" text-anchor="middle" font-weight="400">2 ms</text><text transform="translate(540,206.2) scale(0.85,1)" fill="#e000e0" font-size="6.3" text-anchor="middle" font-weight="400">6 ms</text><text transform="translate(605,206.2) scale(0.85,1)" fill="#e000e0" font-size="6.3" text-anchor="end" font-weight="400">10 ms</text><path d="M438 203 l2.5 -3 l2.5 3z" fill="#c000c0"/><line x1="308.9" y1="216" x2="308.9" y2="345" stroke="#222222" stroke-width="1" /><line x1="341.8" y1="216" x2="341.8" y2="345" stroke="#222222" stroke-width="1" /><line x1="374.7" y1="216" x2="374.7" y2="345" stroke="#222222" stroke-width="1" /><line x1="407.6" y1="216" x2="407.6" y2="345" stroke="#222222" stroke-width="1" /><line x1="440.5" y1="216" x2="440.5" y2="345" stroke="#5a5a5a" stroke-width="1" stroke-dasharray="2 2"/><line x1="473.4" y1="216" x2="473.4" y2="345" stroke="#222222" stroke-width="1" /><line x1="506.3" y1="216" x2="506.3" y2="345" stroke="#222222" stroke-width="1" /><line x1="539.2" y1="216" x2="539.2" y2="345" stroke="#222222" stroke-width="1" /><line x1="572.1" y1="216" x2="572.1" y2="345" stroke="#222222" stroke-width="1" /><line x1="276" y1="232.125" x2="605" y2="232.125" stroke="#222222" stroke-width="1" /><line x1="276" y1="248.25" x2="605" y2="248.25" stroke="#222222" stroke-width="1" /><line x1="276" y1="264.375" x2="605" y2="264.375" stroke="#222222" stroke-width="1" /><line x1="276" y1="280.5" x2="605" y2="280.5" stroke="#222222" stroke-width="1" /><line x1="276" y1="296.625" x2="605" y2="296.625" stroke="#222222" stroke-width="1" /><line x1="276" y1="312.75" x2="605" y2="312.75" stroke="#222222" stroke-width="1" /><line x1="276" y1="328.875" x2="605" y2="328.875" stroke="#222222" stroke-width="1" /><rect x="276.5" y="216.5" width="328" height="128" fill="none" stroke="#353535"/><line x1="276" y1="239.4" x2="605" y2="239.4" stroke="#4a4a4a" stroke-width="1" stroke-dasharray="1 5"/><rect x="295" y="241.5" width="291" height="58.5" fill="#25233f" /><rect x="295" y="247.5" width="66" height="52.5" fill="#286984" /><rect x="295.5" y="248" width="65" height="52" fill="none" stroke="#3aa8cc" stroke-width="1" opacity="0.8"/><text x="328.0" y="253" fill="#e8f0f0" font-size="6" text-anchor="middle" font-weight="400" >Data = 1627</text><rect x="370.6" y="247.5" width="64.39999999999998" height="52.5" fill="#286984" /><rect x="371.1" y="248" width="63.39999999999998" height="52" fill="none" stroke="#3aa8cc" stroke-width="1" opacity="0.8"/><text x="402.8" y="253" fill="#e8f0f0" font-size="6" text-anchor="middle" font-weight="400" >Data = 5823</text><rect x="445.6" y="247.5" width="64.89999999999998" height="52.5" fill="#286984" /><rect x="446.1" y="248" width="63.89999999999998" height="52" fill="none" stroke="#3aa8cc" stroke-width="1" opacity="0.8"/><text x="478.05" y="253" fill="#e8f0f0" font-size="6" text-anchor="middle" font-weight="400" >Data = 9719</text><rect x="521" y="247.5" width="64.79999999999995" height="52.5" fill="#286984" /><rect x="521.5" y="248" width="63.799999999999955" height="52" fill="none" stroke="#3aa8cc" stroke-width="1" opacity="0.8"/><text x="553.4" y="253" fill="#e8f0f0" font-size="6" text-anchor="middle" font-weight="400" >Data = 13715</text><line x1="295" y1="232.125" x2="586" y2="232.125" stroke="#ffffff" stroke-width="1" opacity="0.06"/><line x1="295" y1="248.25" x2="586" y2="248.25" stroke="#ffffff" stroke-width="1" opacity="0.06"/><line x1="295" y1="264.375" x2="586" y2="264.375" stroke="#ffffff" stroke-width="1" opacity="0.06"/><line x1="295" y1="280.5" x2="586" y2="280.5" stroke="#ffffff" stroke-width="1" opacity="0.06"/><line x1="295" y1="296.625" x2="586" y2="296.625" stroke="#ffffff" stroke-width="1" opacity="0.06"/><line x1="295" y1="312.75" x2="586" y2="312.75" stroke="#ffffff" stroke-width="1" opacity="0.06"/><line x1="295" y1="328.875" x2="586" y2="328.875" stroke="#ffffff" stroke-width="1" opacity="0.06"/><path d="M276 262.7H284V290.5H313V262.7H319.5V290.5H328V262.7H333V290.5H337.6V262.7H344.3V290.5H348.8V262.7H359.3V290.5H378.2V262.7H383.8V290.5H387V262.7H395.8V290.5H399.4V262.7H404.2V290.5H408.2V262.7H434.2V290.5H450V262.7H454.4V290.5H462.4V262.7H466.8V290.5H471.2V262.7H492V290.5H496V262.7H509.2V290.5H525.4V262.7H533.4V290.5H537.4V262.7H541.8V290.5H545.8V262.7H554.6V290.5H563V262.7H567.4V290.5H575.4V262.7H605" stroke="#c8d488" stroke-width="1.1" fill="none"/><path d="M276 262.7 H284 V290.5 H295" stroke="#c8b848" stroke-width="1.1" fill="none"/><path d="M276 303 H293.7H293.7V331 H295.5 V303 H297.8V331 H299.6 V303 H301.9V331 H303.7 V303 H306.0V331 H307.8 V303 H310.1V331 H311.9 V303 H314.2V331 H316.0 V303 H318.3V331 H320.1 V303 H322.4V331 H324.2 V303 H326.5V331 H328.3 V303 H330.6V331 H332.4 V303 H334.7V331 H336.5 V303 H338.8V331 H340.6 V303 H342.9V331 H344.7 V303 H347.0V331 H348.8 V303 H351.1V331 H352.9 V303 H355.2V331 H357.0 V303 H359.3H368.4V331 H370.3 V303 H372.5V331 H374.4 V303 H376.6V331 H378.5 V303 H380.7V331 H382.6 V303 H384.8V331 H386.7 V303 H389.0V331 H390.8 V303 H393.1V331 H394.9 V303 H397.2V331 H399.0 V303 H401.3V331 H403.2 V303 H405.4V331 H407.3 V303 H409.5V331 H411.4 V303 H413.6V331 H415.5 V303 H417.8V331 H419.6 V303 H421.9V331 H423.7 V303 H426.0V331 H427.8 V303 H430.1V331 H431.9 V303 H434.2H443.4V331 H445.3 V303 H447.5V331 H449.4 V303 H451.6V331 H453.5 V303 H455.7V331 H457.6 V303 H459.8V331 H461.7 V303 H464.0V331 H465.8 V303 H468.1V331 H469.9 V303 H472.2V331 H474.0 V303 H476.3V331 H478.2 V303 H480.4V331 H482.3 V303 H484.5V331 H486.4 V303 H488.6V331 H490.5 V303 H492.8V331 H494.6 V303 H496.9V331 H498.7 V303 H501.0V331 H502.8 V303 H505.1V331 H506.9 V303 H509.2H519.4V331 H521.3 V303 H523.5V331 H525.4 V303 H527.6V331 H529.5 V303 H531.7V331 H533.6 V303 H535.8V331 H537.7 V303 H540.0V331 H541.8 V303 H544.1V331 H545.9 V303 H548.2V331 H550.0 V303 H552.3V331 H554.2 V303 H556.4V331 H558.3 V303 H560.5V331 H562.4 V303 H564.6V331 H566.5 V303 H568.8V331 H570.6 V303 H572.9V331 H574.7 V303 H577.0V331 H578.8 V303 H581.1V331 H582.9 V303 H585.2H605" stroke="#b8a828" stroke-width="0.9" fill="none"/><text x="279" y="279" fill="#d8d060" font-size="5" text-anchor="start" font-weight="400" >DATA.0</text><text x="279" y="319" fill="#d8d060" font-size="5" text-anchor="start" font-weight="400" >DATA.1</text><text x="598" y="279" fill="#d8d060" font-size="5" text-anchor="start" font-weight="400" >D0</text><text x="598" y="319" fill="#d8d060" font-size="5" text-anchor="start" font-weight="400" >D1</text><text transform="translate(278,352.8) scale(0.85,1)" fill="#e8d818" font-size="6.3" text-anchor="start" font-weight="400">8.07 µs</text><text transform="translate(342,352.8) scale(0.85,1)" fill="#e8d818" font-size="6.3" text-anchor="middle" font-weight="400">10.59 µs</text><text transform="translate(408,352.8) scale(0.85,1)" fill="#e8d818" font-size="6.3" text-anchor="middle" font-weight="400">13.11 µs</text><text transform="translate(474,352.8) scale(0.85,1)" fill="#e8d818" font-size="6.3" text-anchor="middle" font-weight="400">15.63 µs</text><text transform="translate(540,352.8) scale(0.85,1)" fill="#e8d818" font-size="6.3" text-anchor="middle" font-weight="400">18.15 µs</text><text transform="translate(605,352.8) scale(0.85,1)" fill="#e8d818" font-size="6.3" text-anchor="end" font-weight="400">20.67 µs</text><circle cx="277" cy="348" r="0.9" fill="#e0d020"/><line x1="675.9" y1="69" x2="675.9" y2="346" stroke="#222222" stroke-width="1" /><line x1="708.8" y1="69" x2="708.8" y2="346" stroke="#222222" stroke-width="1" /><line x1="741.7" y1="69" x2="741.7" y2="346" stroke="#222222" stroke-width="1" /><line x1="774.6" y1="69" x2="774.6" y2="346" stroke="#222222" stroke-width="1" /><line x1="807.5" y1="69" x2="807.5" y2="346" stroke="#5a5a5a" stroke-width="1" stroke-dasharray="2 2"/><line x1="840.4" y1="69" x2="840.4" y2="346" stroke="#222222" stroke-width="1" /><line x1="873.3" y1="69" x2="873.3" y2="346" stroke="#222222" stroke-width="1" /><line x1="906.2" y1="69" x2="906.2" y2="346" stroke="#222222" stroke-width="1" /><line x1="939.1" y1="69" x2="939.1" y2="346" stroke="#222222" stroke-width="1" /><line x1="643" y1="103.625" x2="972" y2="103.625" stroke="#222222" stroke-width="1" /><line x1="643" y1="138.25" x2="972" y2="138.25" stroke="#222222" stroke-width="1" /><line x1="643" y1="172.875" x2="972" y2="172.875" stroke="#222222" stroke-width="1" /><line x1="643" y1="207.5" x2="972" y2="207.5" stroke="#222222" stroke-width="1" /><line x1="643" y1="242.125" x2="972" y2="242.125" stroke="#222222" stroke-width="1" /><line x1="643" y1="276.75" x2="972" y2="276.75" stroke="#222222" stroke-width="1" /><line x1="643" y1="311.375" x2="972" y2="311.375" stroke="#222222" stroke-width="1" /><rect x="643.5" y="69.5" width="328" height="276" fill="none" stroke="#353535"/><line x1="643" y1="121" x2="972" y2="121" stroke="#4a4a4a" stroke-width="1" stroke-dasharray="1 6"/><line x1="643" y1="207.8" x2="972" y2="207.8" stroke="#5a5a5a" stroke-width="1" stroke-dasharray="1 4"/><line x1="643" y1="293.7" x2="972" y2="293.7" stroke="#4a4a4a" stroke-width="1" stroke-dasharray="1 6"/><text transform="translate(641.5,75.0) scale(0.85,1)" fill="#18c8d8" font-size="6.3" text-anchor="end" font-weight="400">400 V</text><text transform="translate(641.5,105.8) scale(0.85,1)" fill="#18c8d8" font-size="6.3" text-anchor="end" font-weight="400">300 V</text><text transform="translate(641.5,140.39999999999998) scale(0.85,1)" fill="#18c8d8" font-size="6.3" text-anchor="end" font-weight="400">200 V</text><text transform="translate(641.5,175.0) scale(0.85,1)" fill="#18c8d8" font-size="6.3" text-anchor="end" font-weight="400">100 V</text><text transform="translate(635.8,210.2) scale(0.85,1)" fill="#18c8d8" font-size="6.3" text-anchor="end" font-weight="400">0</text><text transform="translate(641.5,244.2) scale(0.85,1)" fill="#18c8d8" font-size="6.3" text-anchor="end" font-weight="400">-100 V</text><text transform="translate(641.5,278.8) scale(0.85,1)" fill="#18c8d8" font-size="6.3" text-anchor="end" font-weight="400">-200 V</text><text transform="translate(641.5,313.40000000000003) scale(0.85,1)" fill="#18c8d8" font-size="6.3" text-anchor="end" font-weight="400">-300 V</text><text transform="translate(641.5,344.8) scale(0.85,1)" fill="#18c8d8" font-size="6.3" text-anchor="end" font-weight="400">-400 V</text><text transform="translate(643.8,352.6) scale(0.85,1)" fill="#18c8d8" font-size="6.3" text-anchor="start" font-weight="400">-10 ms</text><text transform="translate(709,352.6) scale(0.85,1)" fill="#18c8d8" font-size="6.3" text-anchor="middle" font-weight="400">-6 ms</text><text transform="translate(775,352.6) scale(0.85,1)" fill="#18c8d8" font-size="6.3" text-anchor="middle" font-weight="400">-2 ms</text><text transform="translate(842,352.6) scale(0.85,1)" fill="#18c8d8" font-size="6.3" text-anchor="middle" font-weight="400">2 ms</text><text transform="translate(907,352.6) scale(0.85,1)" fill="#18c8d8" font-size="6.3" text-anchor="middle" font-weight="400">6 ms</text><text transform="translate(972,352.6) scale(0.85,1)" fill="#18c8d8" font-size="6.3" text-anchor="end" font-weight="400">10 ms</text><rect x="636" y="202" width="7.5" height="5.3" fill="#10e8f0" /><text transform="translate(637,206.6) scale(0.9,1)" fill="#107080" font-size="4.5" text-anchor="start" font-weight="400">C3</text><path d="M638.5 207.3 h2 l-1 2z" fill="#10e8f0"/><polyline points="643.0,179.6 644.0,177.5 645.0,175.4 646.0,173.3 647.0,171.3 648.0,169.2 649.0,167.1 650.0,165.1 651.0,163.1 652.0,161.1 653.0,159.1 654.0,157.1 655.0,155.2 656.0,153.3 657.0,151.4 658.0,149.5 659.0,147.6 660.0,145.8 661.0,144.0 662.0,142.2 663.0,140.4 664.0,138.6 665.0,136.9 666.0,135.2 667.0,133.5 668.0,131.9 669.0,130.3 670.0,128.7 671.0,127.1 672.0,125.6 673.0,124.1 674.0,122.7 675.0,121.2 676.0,119.8 677.0,118.4 678.0,117.1 679.0,115.8 680.0,114.5 681.0,113.3 682.0,112.1 683.0,110.9 684.0,109.8 685.0,108.7 686.0,107.6 687.0,106.6 688.0,105.6 689.0,104.7 690.0,103.8 691.0,102.9 692.0,102.1 693.0,101.3 694.0,100.5 695.0,99.8 696.0,99.1 697.0,98.5 698.0,97.9 699.0,97.3 700.0,96.8 701.0,96.3 702.0,95.9 703.0,95.5 704.0,95.1 705.0,94.8 706.0,94.6 707.0,94.3 708.0,94.1 709.0,94.0 710.0,93.9 711.0,93.8 712.0,93.8 713.0,93.8 714.0,93.9 715.0,94.0 716.0,94.1 717.0,94.3 718.0,94.6 719.0,94.8 720.0,95.1 721.0,95.5 722.0,95.9 723.0,96.3 724.0,96.8 725.0,97.3 726.0,97.9 727.0,98.5 728.0,99.1 729.0,99.8 730.0,100.5 731.0,101.3 732.0,102.1 733.0,102.9 734.0,103.8 735.0,104.7 736.0,105.6 737.0,106.6 738.0,107.6 739.0,108.7 740.0,109.8 741.0,110.9 742.0,112.1 743.0,113.3 744.0,114.5 745.0,115.8 746.0,117.1 747.0,118.4 748.0,119.8 749.0,121.2 750.0,122.7 751.0,124.1 752.0,125.6 753.0,127.1 754.0,128.7 755.0,130.3 756.0,131.9 757.0,133.5 758.0,135.2 759.0,136.9 760.0,138.6 761.0,140.4 762.0,142.2 763.0,144.0 764.0,145.8 765.0,147.6 766.0,149.5 767.0,151.4 768.0,153.3 769.0,155.2 770.0,157.1 771.0,159.1 772.0,161.1 773.0,163.1 774.0,165.1 775.0,167.1 776.0,169.2 777.0,171.3 778.0,173.3 779.0,175.4 780.0,177.5 781.0,179.6 782.0,181.8 783.0,183.9 784.0,186.0 785.0,188.2 786.0,190.3 787.0,192.5 788.0,194.7 789.0,196.8 790.0,199.0 791.0,201.2 792.0,203.4 793.0,205.6 794.0,207.8 795.0,209.9 796.0,212.1 797.0,214.3 798.0,216.5 799.0,218.7 800.0,220.8 801.0,223.0 802.0,225.2 803.0,227.3 804.0,229.5 805.0,231.6 806.0,233.8 807.0,235.9 808.0,238.0 809.0,240.1 810.0,242.2 811.0,244.3 812.0,246.4 813.0,248.4 814.0,250.5 815.0,252.5 816.0,254.5 817.0,256.5 818.0,258.5 819.0,260.4 820.0,262.4 821.0,264.3 822.0,266.2 823.0,268.1 824.0,269.9 825.0,271.7 826.0,273.6 827.0,275.3 828.0,277.1 829.0,278.8 830.0,280.5 831.0,282.2 832.0,283.9 833.0,285.5 834.0,287.1 835.0,288.7 836.0,290.2 837.0,291.7 838.0,293.2 839.0,294.7 840.0,296.1 841.0,297.5 842.0,298.8 843.0,300.2 844.0,301.4 845.0,302.7 846.0,303.9 847.0,305.1 848.0,306.3 849.0,307.4 850.0,308.4 851.0,309.5 852.0,310.5 853.0,311.5 854.0,312.4 855.0,313.3 856.0,314.1 857.0,315.0 858.0,315.7 859.0,316.5 860.0,317.2 861.0,317.8 862.0,318.4 863.0,319.0 864.0,319.6 865.0,320.0 866.0,320.5 867.0,320.9 868.0,321.3 869.0,321.6 870.0,321.9 871.0,322.2 872.0,322.4 873.0,322.5 874.0,322.7 875.0,322.8 876.0,322.8 877.0,322.8 878.0,322.8 879.0,322.7 880.0,322.5 881.0,322.4 882.0,322.2 883.0,321.9 884.0,321.6 885.0,321.3 886.0,320.9 887.0,320.5 888.0,320.0 889.0,319.6 890.0,319.0 891.0,318.4 892.0,317.8 893.0,317.2 894.0,316.5 895.0,315.7 896.0,315.0 897.0,314.1 898.0,313.3 899.0,312.4 900.0,311.5 901.0,310.5 902.0,309.5 903.0,308.4 904.0,307.4 905.0,306.3 906.0,305.1 907.0,303.9 908.0,302.7 909.0,301.4 910.0,300.2 911.0,298.8 912.0,297.5 913.0,296.1 914.0,294.7 915.0,293.2 916.0,291.7 917.0,290.2 918.0,288.7 919.0,287.1 920.0,285.5 921.0,283.9 922.0,282.2 923.0,280.5 924.0,278.8 925.0,277.1 926.0,275.3 927.0,273.6 928.0,271.7 929.0,269.9 930.0,268.1 931.0,266.2 932.0,264.3 933.0,262.4 934.0,260.4 935.0,258.5 936.0,256.5 937.0,254.5 938.0,252.5 939.0,250.5 940.0,248.4 941.0,246.4 942.0,244.3 943.0,242.2 944.0,240.1 945.0,238.0 946.0,235.9 947.0,233.8 948.0,231.6 949.0,229.5 950.0,227.3 951.0,225.2 952.0,223.0 953.0,220.8 954.0,218.7 955.0,216.5 956.0,214.3 957.0,212.1 958.0,209.9 959.0,207.8 960.0,205.6 961.0,203.4 962.0,201.2 963.0,199.0 964.0,196.8 965.0,194.7 966.0,192.5 967.0,190.3 968.0,188.2 969.0,186.0 970.0,183.9 971.0,181.8 972.0,179.6" stroke="#00b0a8" stroke-width="1.4" fill="none"/><polyline points="643.0,179.8 644.0,177.7 645.0,175.6 646.0,173.6 647.0,171.6 648.0,169.5 649.0,167.5 650.0,165.6 651.0,163.6 652.0,161.6 653.0,159.7 654.0,157.8 655.0,155.9 656.0,154.0 657.0,152.1 658.0,150.3 659.0,148.4 660.0,146.6 661.0,144.9 662.0,143.1 663.0,141.4 664.0,139.7 665.0,138.0 666.0,136.3 667.0,134.7 668.0,133.1 669.0,131.5 670.0,129.9 671.0,128.4 672.0,126.9 673.0,125.5 674.0,124.0 675.0,122.6 676.0,121.2 677.0,119.9 678.0,118.6 679.0,117.3 680.0,116.1 681.0,114.9 682.0,113.7 683.0,112.5 684.0,111.4 685.0,110.4 686.0,109.3 687.0,108.3 688.0,107.4 689.0,106.4 690.0,105.5 691.0,104.7 692.0,103.9 693.0,103.1 694.0,102.4 695.0,101.7 696.0,101.0 697.0,100.4 698.0,99.8 699.0,99.2 700.0,98.7 701.0,98.3 702.0,97.8 703.0,97.5 704.0,97.1 705.0,96.8 706.0,96.5 707.0,96.3 708.0,96.1 709.0,96.0 710.0,95.9 711.0,95.8 712.0,95.8 713.0,95.8 714.0,95.9 715.0,96.0 716.0,96.1 717.0,96.3 718.0,96.5 719.0,96.8 720.0,97.1 721.0,97.5 722.0,97.8 723.0,98.3 724.0,98.7 725.0,99.2 726.0,99.8 727.0,100.4 728.0,101.0 729.0,101.7 730.0,102.4 731.0,103.1 732.0,103.9 733.0,104.7 734.0,105.5 735.0,106.4 736.0,107.4 737.0,108.3 738.0,109.3 739.0,110.4 740.0,111.4 741.0,112.5 742.0,113.7 743.0,114.9 744.0,116.1 745.0,117.3 746.0,118.6 747.0,119.9 748.0,121.2 749.0,122.6 750.0,124.0 751.0,125.5 752.0,126.9 753.0,128.4 754.0,129.9 755.0,131.5 756.0,133.1 757.0,134.7 758.0,136.3 759.0,138.0 760.0,139.7 761.0,141.4 762.0,143.1 763.0,144.9 764.0,146.6 765.0,148.4 766.0,150.3 767.0,152.1 768.0,154.0 769.0,155.9 770.0,157.8 771.0,159.7 772.0,161.6 773.0,163.6 774.0,165.6 775.0,167.5 776.0,169.5 777.0,171.6 778.0,173.6 779.0,175.6 780.0,177.7 781.0,179.8 782.0,181.8 783.0,183.9 784.0,186.0 785.0,188.1 786.0,190.2 787.0,192.3 788.0,194.5 789.0,196.6 790.0,198.7 791.0,200.9 792.0,203.0 793.0,205.1 794.0,207.3 795.0,209.4 796.0,211.5 797.0,213.7 798.0,215.8 799.0,217.9 800.0,220.1 801.0,222.2 802.0,224.3 803.0,226.4 804.0,228.5 805.0,230.6 806.0,232.7 807.0,234.8 808.0,236.9 809.0,238.9 810.0,241.0 811.0,243.0 812.0,245.0 813.0,247.1 814.0,249.0 815.0,251.0 816.0,253.0 817.0,254.9 818.0,256.9 819.0,258.8 820.0,260.7 821.0,262.6 822.0,264.4 823.0,266.3 824.0,268.1 825.0,269.9 826.0,271.6 827.0,273.4 828.0,275.1 829.0,276.8 830.0,278.5 831.0,280.1 832.0,281.7 833.0,283.3 834.0,284.9 835.0,286.4 836.0,287.9 837.0,289.4 838.0,290.9 839.0,292.3 840.0,293.7 841.0,295.0 842.0,296.4 843.0,297.6 844.0,298.9 845.0,300.1 846.0,301.3 847.0,302.5 848.0,303.6 849.0,304.7 850.0,305.8 851.0,306.8 852.0,307.8 853.0,308.7 854.0,309.6 855.0,310.5 856.0,311.3 857.0,312.1 858.0,312.9 859.0,313.6 860.0,314.3 861.0,314.9 862.0,315.5 863.0,316.1 864.0,316.6 865.0,317.1 866.0,317.6 867.0,318.0 868.0,318.3 869.0,318.7 870.0,318.9 871.0,319.2 872.0,319.4 873.0,319.5 874.0,319.7 875.0,319.8 876.0,319.8 877.0,319.8 878.0,319.8 879.0,319.7 880.0,319.5 881.0,319.4 882.0,319.2 883.0,318.9 884.0,318.7 885.0,318.3 886.0,318.0 887.0,317.6 888.0,317.1 889.0,316.6 890.0,316.1 891.0,315.5 892.0,314.9 893.0,314.3 894.0,313.6 895.0,312.9 896.0,312.1 897.0,311.3 898.0,310.5 899.0,309.6 900.0,308.7 901.0,307.8 902.0,306.8 903.0,305.8 904.0,304.7 905.0,303.6 906.0,302.5 907.0,301.3 908.0,300.1 909.0,298.9 910.0,297.6 911.0,296.4 912.0,295.0 913.0,293.7 914.0,292.3 915.0,290.9 916.0,289.4 917.0,287.9 918.0,286.4 919.0,284.9 920.0,283.3 921.0,281.7 922.0,280.1 923.0,278.5 924.0,276.8 925.0,275.1 926.0,273.4 927.0,271.6 928.0,269.9 929.0,268.1 930.0,266.3 931.0,264.4 932.0,262.6 933.0,260.7 934.0,258.8 935.0,256.9 936.0,254.9 937.0,253.0 938.0,251.0 939.0,249.0 940.0,247.1 941.0,245.0 942.0,243.0 943.0,241.0 944.0,238.9 945.0,236.9 946.0,234.8 947.0,232.7 948.0,230.6 949.0,228.5 950.0,226.4 951.0,224.3 952.0,222.2 953.0,220.1 954.0,217.9 955.0,215.8 956.0,213.7 957.0,211.5 958.0,209.4 959.0,207.3 960.0,205.1 961.0,203.0 962.0,200.9 963.0,198.7 964.0,196.6 965.0,194.5 966.0,192.3 967.0,190.2 968.0,188.1 969.0,186.0 970.0,183.9 971.0,181.8 972.0,179.8" stroke="#ecdf3a" stroke-width="1.2" fill="none"/><line x1="654.4" y1="156" x2="654.4" y2="301" stroke="#e89e14" stroke-width="1.5" /><line x1="692.8" y1="69" x2="692.8" y2="101.6" stroke="#e89e14" stroke-width="1.5" /><line x1="729.6" y1="105" x2="729.6" y2="174.6" stroke="#e89e14" stroke-width="1.5" /><line x1="793.6" y1="69" x2="793.6" y2="206" stroke="#e89e14" stroke-width="1.5" /><line x1="780.8" y1="180" x2="780.8" y2="190" stroke="#e89e14" stroke-width="1.5" /><line x1="668" y1="128" x2="668" y2="132" stroke="#e89e14" stroke-width="1.5" /><line x1="678.4" y1="116" x2="678.4" y2="120" stroke="#e89e14" stroke-width="1.5" /><line x1="805.5" y1="234" x2="805.5" y2="277" stroke="#e89e14" stroke-width="1.5" /><line x1="817.4" y1="258" x2="817.4" y2="275" stroke="#e89e14" stroke-width="1.5" /><line x1="843" y1="227" x2="843" y2="297" stroke="#e89e14" stroke-width="1.5" /><line x1="855.5" y1="311" x2="855.5" y2="346" stroke="#e89e14" stroke-width="1.5" /><line x1="881" y1="316" x2="881" y2="322" stroke="#e89e14" stroke-width="1.5" /><line x1="893" y1="316" x2="893" y2="346" stroke="#e89e14" stroke-width="1.5" /><line x1="906.5" y1="304" x2="906.5" y2="337" stroke="#e89e14" stroke-width="1.5" /><text transform="translate(563,366.8) scale(0.88,1)" fill="#707070" font-size="6.5" text-anchor="start" font-weight="400">P5:- - -</text><text transform="translate(619,366.8) scale(0.88,1)" fill="#707070" font-size="6.5" text-anchor="start" font-weight="400">P6:- - -</text><text transform="translate(675,366.8) scale(0.88,1)" fill="#707070" font-size="6.5" text-anchor="start" font-weight="400">P7:- - -</text><text transform="translate(731,366.8) scale(0.88,1)" fill="#707070" font-size="6.5" text-anchor="start" font-weight="400">P8:- - -</text><text transform="translate(787,366.8) scale(0.88,1)" fill="#707070" font-size="6.5" text-anchor="start" font-weight="400">P9:- - -</text><text transform="translate(843,366.8) scale(0.88,1)" fill="#707070" font-size="6.5" text-anchor="start" font-weight="400">P10:- - -</text><text transform="translate(899,366.8) scale(0.88,1)" fill="#707070" font-size="6.5" text-anchor="start" font-weight="400">P11:- - -</text><text transform="translate(955,366.8) scale(0.88,1)" fill="#707070" font-size="6.5" text-anchor="start" font-weight="400">P12:- - -</text><text x="245" y="367" fill="#fff" font-size="6.5" text-anchor="start" font-weight="700" >Measure</text><text x="304" y="367" fill="#e8e8e8" font-size="6.5" text-anchor="start" font-weight="400" >P1:MsgToVal(De...</text><text x="361" y="367" fill="#777" font-size="6.5" text-anchor="start" font-weight="400" >P2:MsgToVal(De...</text><text x="417" y="367" fill="#777" font-size="6.5" text-anchor="start" font-weight="400" >P3:MsgToVal(De...</text><text x="473" y="367" fill="#777" font-size="6.5" text-anchor="start" font-weight="400" >P4:MsgToVal(De...</text><rect x="243" y="368" width="734" height="8" fill="#1e1e1e" /><text x="245" y="375" fill="#d0d0d0" font-size="6.5" text-anchor="start" font-weight="400" >value</text><text x="323" y="375" fill="#e8e8e8" font-size="6.5" text-anchor="start" font-weight="400" textLength="33" lengthAdjust="spacingAndGlyphs" >2.45700e+3</text><text x="245" y="383" fill="#a0a0a0" font-size="6.5" text-anchor="start" font-weight="400" >status</text><path d="M351 381 l1.5 1.5 l3 -3.5" stroke="#20d020" stroke-width="1.2" fill="none"/><rect x="243" y="383.5" width="245" height="0.7" fill="#333" /><rect x="244" y="384" width="38" height="7.5" fill="#f000f0" /><text x="245.5" y="390.3" fill="#500050" font-size="6.5" text-anchor="start" font-weight="700" textLength="35" lengthAdjust="spacingAndGlyphs" >SPI-Custom</text><text x="283" y="390.3" fill="#fff" font-size="6.5" text-anchor="start" font-weight="700" >Time</text><text x="321.5" y="390.3" fill="#fff" font-size="6.5" text-anchor="start" font-weight="700" >Data</text><text x="440" y="390.3" fill="#fff" font-size="6.5" text-anchor="start" font-weight="700" textLength="39" lengthAdjust="spacingAndGlyphs" >Bit Rate/Byte</text><rect x="243" y="399.3" width="245" height="0.6" fill="#262626" /><text x="245" y="397.90000000000003" fill="#8ab0d8" font-size="6.3" text-anchor="start" font-weight="400" >3817</text><text x="282.5" y="397.90000000000003" fill="#e8e8e8" font-size="6.3" text-anchor="start" font-weight="400" >-30.220 µs</text><text x="321" y="397.90000000000003" fill="#e8e8e8" font-size="6.3" text-anchor="start" font-weight="400" textLength="106.6" lengthAdjust="spacingAndGlyphs" >1646.0000 5842.0000 9738.0000 137...</text><path d="M436.5 397.6 l2.5 -2.5 v2.5z" fill="#e8e8e8"/><text x="440" y="397.90000000000003" fill="#e8e8e8" font-size="6.3" text-anchor="start" font-weight="400" textLength="40.4" lengthAdjust="spacingAndGlyphs" >6.45161 Mbit/s</text><rect x="243" y="407.1" width="245" height="0.6" fill="#262626" /><text x="245" y="405.70000000000005" fill="#8ab0d8" font-size="6.3" text-anchor="start" font-weight="400" >3818</text><text x="282.5" y="405.70000000000005" fill="#e8e8e8" font-size="6.3" text-anchor="start" font-weight="400" >-17.100 µs</text><text x="321" y="405.70000000000005" fill="#e8e8e8" font-size="6.3" text-anchor="start" font-weight="400" textLength="106.6" lengthAdjust="spacingAndGlyphs" >1640.0000 5836.0000 9732.0000 137...</text><path d="M436.5 405.4 l2.5 -2.5 v2.5z" fill="#e8e8e8"/><text x="440" y="405.70000000000005" fill="#e8e8e8" font-size="6.3" text-anchor="start" font-weight="400" textLength="40.4" lengthAdjust="spacingAndGlyphs" >6.45161 Mbit/s</text><rect x="243" y="414.90000000000003" width="245" height="0.6" fill="#262626" /><text x="245" y="413.50000000000006" fill="#8ab0d8" font-size="6.3" text-anchor="start" font-weight="400" >3819</text><text x="282.5" y="413.50000000000006" fill="#e8e8e8" font-size="6.3" text-anchor="start" font-weight="400" >-4.140 µs</text><text x="321" y="413.50000000000006" fill="#e8e8e8" font-size="6.3" text-anchor="start" font-weight="400" textLength="106.6" lengthAdjust="spacingAndGlyphs" >1631.0000 5827.0000 9723.0000 137...</text><path d="M436.5 413.2 l2.5 -2.5 v2.5z" fill="#e8e8e8"/><text x="440" y="413.50000000000006" fill="#e8e8e8" font-size="6.3" text-anchor="start" font-weight="400" textLength="40.4" lengthAdjust="spacingAndGlyphs" >6.45161 Mbit/s</text><rect x="243.5" y="415.2" width="244.5" height="7.6" fill="#bcb81e" /><rect x="243" y="422.7" width="245" height="0.6" fill="#262626" /><text x="245" y="421.3" fill="#e0e0a0" font-size="6.3" text-anchor="start" font-weight="400" >3820</text><text x="282.5" y="421.3" fill="#e8e8b0" font-size="6.3" text-anchor="start" font-weight="400" >8.820 µs</text><text x="321" y="421.3" fill="#e8e8b0" font-size="6.3" text-anchor="start" font-weight="400" textLength="106.6" lengthAdjust="spacingAndGlyphs" >1627.0000 5823.0000 9719.0000 137...</text><path d="M436.5 421.0 l2.5 -2.5 v2.5z" fill="#e8e8b0"/><text x="440" y="421.3" fill="#e8e8b0" font-size="6.3" text-anchor="start" font-weight="400" textLength="40.4" lengthAdjust="spacingAndGlyphs" >6.45161 Mbit/s</text><rect x="243" y="430.5" width="245" height="0.6" fill="#262626" /><text x="245" y="429.1" fill="#8ab0d8" font-size="6.3" text-anchor="start" font-weight="400" >3821</text><text x="282.5" y="429.1" fill="#e8e8e8" font-size="6.3" text-anchor="start" font-weight="400" >21.940 µs</text><text x="321" y="429.1" fill="#e8e8e8" font-size="6.3" text-anchor="start" font-weight="400" textLength="106.6" lengthAdjust="spacingAndGlyphs" >1622.0000 5818.0000 9714.0000 137...</text><path d="M436.5 428.8 l2.5 -2.5 v2.5z" fill="#e8e8e8"/><text x="440" y="429.1" fill="#e8e8e8" font-size="6.3" text-anchor="start" font-weight="400" textLength="40.4" lengthAdjust="spacingAndGlyphs" >6.45161 Mbit/s</text><rect x="282" y="391.8" width="0.7" height="38.5" fill="#2a2a2a" /><rect x="320" y="391.8" width="0.7" height="38.5" fill="#2a2a2a" /><rect x="436" y="391.8" width="0.7" height="38.5" fill="#1e1e1e" /><path d="M317 388 h2.5 l-1.25 1.2z" fill="#ccc"/><path d="M436.5 386 h3 l-1.5 2z" fill="#30a0d0"/><path d="M483 388 h2.5 l-1.25 1.2z" fill="#ccc"/><rect x="488" y="384" width="12.5" height="46.5" fill="#4e4e4e" /><rect x="489.3" y="385.2" width="10" height="8.5" fill="#5e5e5e" /><path d="M490.3 392 l4.7 -5 l4.7 5z" fill="#fff"/><rect x="489.3" y="394.8" width="10" height="1.2" fill="#3a3a3a" /><rect x="489.3" y="396.2" width="10" height="7.8" fill="#262626" /><rect x="489.3" y="404.5" width="10" height="4.5" fill="#5a5a5a" /><rect x="489.3" y="409.5" width="10" height="8.5" fill="#262626" /><rect x="489.3" y="419" width="10" height="1.2" fill="#3a3a3a" /><rect x="489.3" y="421" width="10" height="8.5" fill="#5e5e5e" /><path d="M490.3 422.5 l4.7 5 l4.7 -5z" fill="#fff"/><rect x="244" y="431" width="47" height="8.2" fill="#00e8f0" /><rect x="244" y="439.2" width="47" height="15" fill="#2a4a6e" /><rect x="244.5" y="431.5" width="46" height="22.5" fill="none" stroke="#1a70b0"/><text x="246" y="437.8" fill="#0a5a6a" font-size="6.5" text-anchor="start" font-weight="400" >C3</text><rect x="278.5" y="432" width="11" height="6.3" fill="#1e2a30" /><rect x="279" y="432.5" width="10" height="5.3" fill="none" stroke="#999" stroke-width="0.6"/><text x="284.0" y="437.6" fill="#f0f0f0" font-size="5.8" text-anchor="middle" font-weight="400" >DC1</text><text x="289" y="446" fill="#e8e8e8" font-size="6.5" text-anchor="end" font-weight="400" >100 V/</text><text x="289" y="453" fill="#e8e8e8" font-size="6.5" text-anchor="end" font-weight="400" >0 mV</text><rect x="247" y="440.5" width="12" height="12" fill="#3a5a80" /><text x="253" y="445.5" fill="#a0b0c0" font-size="3.8" text-anchor="middle" font-weight="400" >500</text><text x="253" y="450.5" fill="#a0b0c0" font-size="3.8" text-anchor="middle" font-weight="400" >MHz</text><rect x="291.8" y="431" width="46.599999999999966" height="8.2" fill="#e000e0" /><rect x="291.8" y="439.2" width="46.599999999999966" height="15" fill="#3c3c3c" /><text x="293.8" y="437.8" fill="#600060" font-size="6.5" text-anchor="start" font-weight="400" >Digital1</text><rect x="327.9" y="432" width="9" height="6.3" fill="#2a2a2a" /><rect x="328.4" y="432.5" width="8" height="5.3" fill="none" stroke="#999" stroke-width="0.6"/><text x="332.4" y="437.6" fill="#f0f0f0" font-size="5.8" text-anchor="middle" font-weight="400" >[2]</text><text x="336.4" y="446" fill="#e8e8e8" font-size="6.5" text-anchor="end" font-weight="400" >50.0 MS/s</text><text x="336.4" y="453" fill="#e8e8e8" font-size="6.5" text-anchor="end" font-weight="400" >1.00 MS</text><rect x="339.6" y="431" width="46.69999999999999" height="8.2" fill="#ffb400" /><rect x="339.6" y="439.2" width="46.69999999999999" height="15" fill="#3c3c3c" /><text x="341.6" y="437.8" fill="#402800" font-size="6.5" text-anchor="start" font-weight="400" >F1</text><text x="384.3" y="437.8" fill="#402800" font-size="6.5" text-anchor="end" font-weight="400" >track(P1)</text><text x="384.3" y="446" fill="#e8e8e8" font-size="6.5" text-anchor="end" font-weight="400" >500/</text><text x="384.3" y="453" fill="#e8e8e8" font-size="6.5" text-anchor="end" font-weight="400" >2.00 ms/</text><rect x="387.5" y="431" width="46.69999999999999" height="8.2" fill="#f0f000" /><rect x="387.5" y="439.2" width="46.69999999999999" height="15" fill="#3c3c3c" /><text x="389.5" y="437.8" fill="#404000" font-size="6.5" text-anchor="start" font-weight="400" >Z1  zoom(Di</text><rect x="423.7" y="432" width="9" height="6.3" fill="#2a2a2a" /><rect x="424.2" y="432.5" width="8" height="5.3" fill="none" stroke="#999" stroke-width="0.6"/><text x="428.2" y="437.6" fill="#f0f0f0" font-size="5.8" text-anchor="middle" font-weight="400" >[2]</text><text x="432.2" y="446" fill="#e8e8e8" font-size="6.5" text-anchor="end" font-weight="400" >50.0 MS/s</text><text x="432.2" y="453" fill="#e8e8e8" font-size="6.5" text-anchor="end" font-weight="400" >630 S</text><rect x="387.5" y="453" width="46.7" height="1.5" fill="#30a030" /><rect x="436" y="431.5" width="46" height="23" fill="none" stroke="#666" stroke-width="0.8" stroke-dasharray="1 1"/><rect x="456.5" y="442.2" width="5" height="1.2" fill="#ddd" /><rect x="458.4" y="440.3" width="1.2" height="5" fill="#ddd" /><rect x="873" y="431.3" width="54" height="7.7" fill="#f4f4f4" /><rect x="873" y="439" width="54" height="15.4" fill="#3c3c3c" /><rect x="928.6" y="431.3" width="46.4" height="7.7" fill="#f4f4f4" /><rect x="928.6" y="439" width="46.4" height="15.4" fill="#3c3c3c" /><text x="875" y="437.8" fill="#333" font-size="6.5" text-anchor="start" font-weight="400" >Tbase</text><text x="926" y="437.8" fill="#333" font-size="6.5" text-anchor="end" font-weight="400" >0.00 ms</text><text x="926" y="446" fill="#e8e8e8" font-size="6.5" text-anchor="end" font-weight="400" >2.00 ms/div</text><text x="875" y="453" fill="#e8e8e8" font-size="6.5" text-anchor="start" font-weight="400" >1 MS</text><text x="926" y="453" fill="#e8e8e8" font-size="6.5" text-anchor="end" font-weight="400" >50 MS/s</text><text x="930" y="437.8" fill="#333" font-size="6.5" text-anchor="start" font-weight="400" >Trigger</text><rect x="961" y="432" width="13.5" height="6.5" fill="#222" /><text x="967.7" y="437.3" fill="#ddd" font-size="5.5" text-anchor="middle" font-weight="400" >Line</text><text x="930" y="446" fill="#e8e8e8" font-size="6.5" text-anchor="start" font-weight="400" >Stop</text><text x="930" y="453" fill="#e8e8e8" font-size="6.5" text-anchor="start" font-weight="400" >Edge</text><text x="974" y="453" fill="#e8e8e8" font-size="6.5" text-anchor="end" font-weight="400" >Positive</text><rect x="242" y="455" width="735" height="9" fill="#1e1e1e" /><text x="245.4" y="462.5" fill="#f0f0f0" font-size="6.5" text-anchor="start" font-weight="700" textLength="32.4" lengthAdjust="spacingAndGlyphs" >TELEDYNE</text><text x="279.7" y="462.5" fill="#c8c8c8" font-size="6.5" text-anchor="start" font-weight="400" textLength="22.3" lengthAdjust="spacingAndGlyphs" >LECROY</text><rect x="304" y="457" width="0.8" height="6" fill="#aaa" /><text x="306.6" y="462.5" fill="#30c030" font-size="6.5" text-anchor="start" font-weight="700" textLength="10" lengthAdjust="spacingAndGlyphs" >HD</text><text x="318.6" y="462.5" fill="#e8e8e8" font-size="6.5" text-anchor="start" font-weight="400" textLength="20.2" lengthAdjust="spacingAndGlyphs" >12 bits</text><rect x="571" y="458.8" width="77" height="2.4" rx="1.2" fill="#f4f4f4"/><rect x="820" y="4" width="188" height="196" fill="#fdfdfd" /><rect x="831" y="14" width="166" height="176" fill="#f9ab1b" /><path d="M859.2 53.1 H892.6 L914.4 120.9 L936.3 53.1 H969.2 V153.1 H944.3 L945.5 83 L925.9 153.1 H903.4 L882.2 83 L884 153.1 H859.2 Z" fill="#fff"/></svg></body></html>
